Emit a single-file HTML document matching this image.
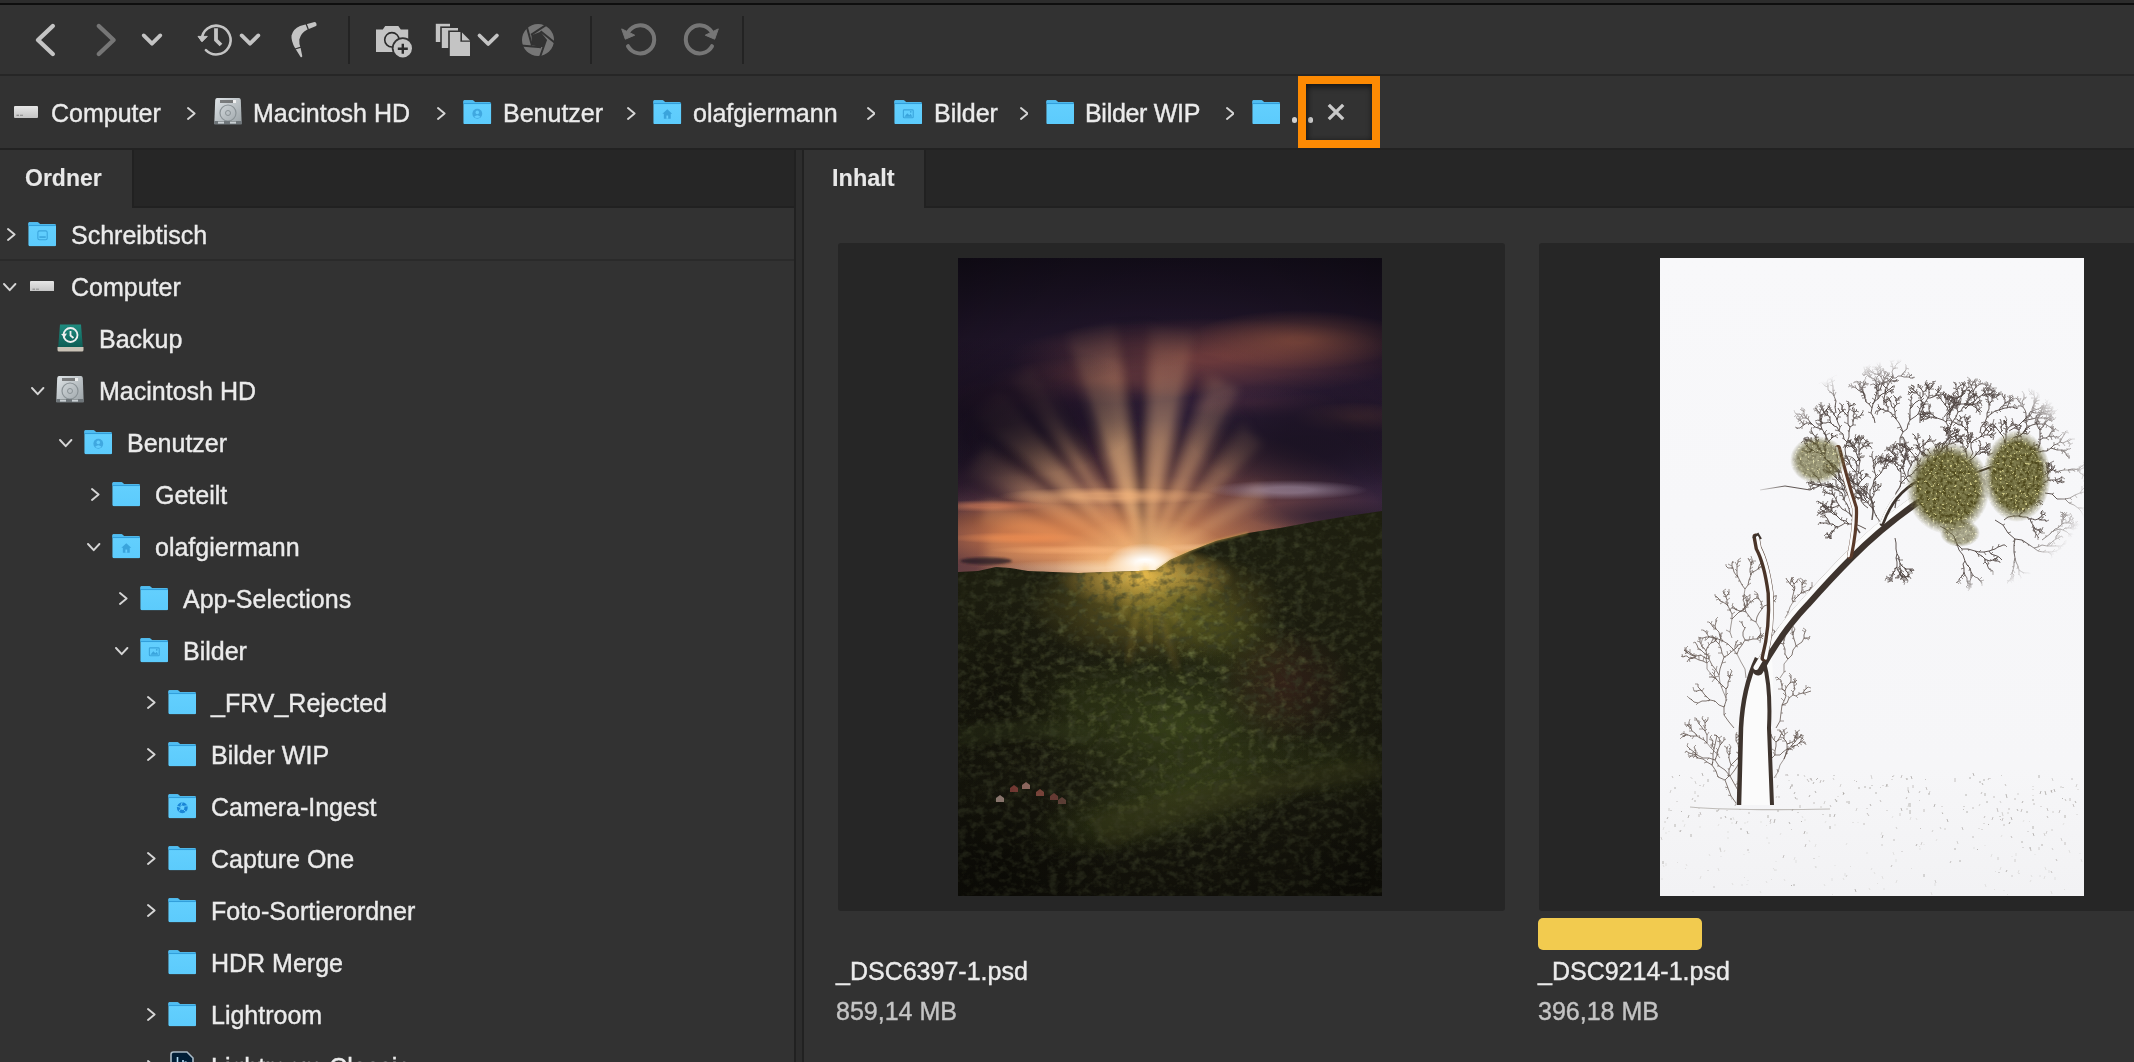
<!DOCTYPE html>
<html><head><meta charset="utf-8">
<style>
html,body{margin:0;padding:0;}
body{width:2134px;height:1062px;overflow:hidden;position:relative;background:#323232;font-family:"Liberation Sans",sans-serif;}
.t{position:absolute;white-space:nowrap;-webkit-text-stroke:0.4px currentColor;will-change:transform;}
svg{display:block}
</style></head><body>
<div style="position:absolute;left:0;top:0;width:2134px;height:3px;background:#2c2c2c"></div>
<div style="position:absolute;left:0;top:3px;width:2134px;height:2px;background:#0e0e0e"></div>
<div style="position:absolute;left:0;top:5px;width:2134px;height:69px;background:#323232"></div>
<div style="position:absolute;left:0;top:74px;width:2134px;height:2px;background:#262626"></div>
<div style="position:absolute;left:0;top:76px;width:2134px;height:72px;background:#323232"></div>
<div style="position:absolute;left:0;top:148px;width:2134px;height:2px;background:#222222"></div>
<div style="position:absolute;left:0;top:150px;width:795px;height:58px;background:#262626;box-shadow:inset 0 -2px 0 #212121"></div>
<div style="position:absolute;left:132px;top:150px;width:2px;height:58px;background:#212121"></div>
<div style="position:absolute;left:0;top:150px;width:132px;height:58px;background:#323232"></div>
<div style="position:absolute;left:804px;top:150px;width:1330px;height:58px;background:#262626;box-shadow:inset 0 -2px 0 #212121"></div>
<div style="position:absolute;left:924px;top:150px;width:2px;height:58px;background:#212121"></div>
<div style="position:absolute;left:804px;top:150px;width:120px;height:58px;background:#323232"></div>
<div style="position:absolute;left:795px;top:150px;width:9px;height:912px;background:#2d2d2d"></div>
<div style="position:absolute;left:794px;top:150px;width:2px;height:912px;background:#212121"></div>
<div style="position:absolute;left:802px;top:150px;width:2px;height:912px;background:#212121"></div>
<div class="t" style="left:25px;top:164.03px;font-size:23px;line-height:28px;color:#e8e8e8;font-weight:bold;-webkit-text-stroke:0.1px currentColor;">Ordner</div>
<div class="t" style="left:832px;top:163.86px;font-size:23.5px;line-height:28px;color:#e8e8e8;font-weight:bold;-webkit-text-stroke:0.1px currentColor;">Inhalt</div>
<div style="position:absolute;left:0;top:259px;width:794px;height:2px;background:#2a2a2a"></div>

<svg width="0" height="0" style="position:absolute">
<defs>
 <linearGradient id="fg" x1="0" y1="0" x2="0" y2="1">
  <stop offset="0" stop-color="#64d0fe"/><stop offset="1" stop-color="#5ccbfc"/>
 </linearGradient>
 <symbol id="folder" viewBox="0 0 29 25">
  <path d="M1.6 0.2 H9.2 Q10.4 0.2 11.2 1.2 L12.2 2.2 H26.8 Q28.6 2.2 28.6 4 V23.2 Q28.6 24.6 27.2 24.6 H1.8 Q0.4 24.6 0.4 23.2 V1.6 Q0.4 0.2 1.6 0.2 Z" fill="url(#fg)"/>
  <path d="M0.4 1.6 Q0.4 0.2 1.6 0.2 H9.2 Q10.4 0.2 11.2 1.2 L12.2 2.2 H26.8 Q28.6 2.2 28.6 4 V3.6 H0.4 Z" fill="#4fbdf2"/>
  <rect x="0.4" y="3.2" width="28.2" height="0.9" fill="#2590d0" opacity="0.85"/>
 </symbol>
 <linearGradient id="cg" x1="0" y1="0" x2="0" y2="1">
  <stop offset="0" stop-color="#e6e6e6"/><stop offset="1" stop-color="#c4c4c4"/>
 </linearGradient>
 <symbol id="computer" viewBox="0 0 24 12">
  <rect x="0" y="0" width="24" height="12" rx="1" fill="url(#cg)"/>
  <rect x="2.5" y="8.8" width="2.5" height="0.8" fill="#666"/><rect x="6" y="8.8" width="3" height="0.8" fill="#777"/>
 </symbol>
 <linearGradient id="hg" x1="0" y1="0" x2="1" y2="1">
  <stop offset="0" stop-color="#dfe4e7"/><stop offset="1" stop-color="#9aa2a6"/>
 </linearGradient>
 <symbol id="hd" viewBox="0 0 28 28">
  <path d="M3 1 H25 Q26.5 1 26.8 3 L27.6 24 V27 H0.4 V24 L1.2 3 Q1.5 1 3 1Z" fill="url(#hg)"/>
  <rect x="6" y="3" width="14" height="3" fill="#555" opacity="0.7"/>
  <rect x="19" y="3" width="3" height="3" fill="#eee"/>
  <circle cx="14" cy="16" r="8" fill="none" stroke="#8a9296" stroke-width="1.2"/>
  <circle cx="14" cy="16" r="2.5" fill="none" stroke="#8a9296" stroke-width="1"/>
  <rect x="0.4" y="24" width="27.2" height="3.5" fill="#6e7579"/>
  <rect x="4" y="24.6" width="6" height="2" fill="#c9cfd2"/><rect x="16" y="24.6" width="6" height="2" fill="#c9cfd2"/>
 </symbol>
 <linearGradient id="bg2" x1="0" y1="0" x2="0" y2="1">
  <stop offset="0" stop-color="#1f8c80"/><stop offset="1" stop-color="#0e5d55"/>
 </linearGradient>
 <symbol id="backup" viewBox="0 0 29 28">
  <path d="M4 0.5 H25 L26.8 23 H2.2 Z" fill="url(#bg2)"/>
  <path d="M1.5 23 H27.5 V26 Q27.5 27.5 26 27.5 H3 Q1.5 27.5 1.5 26Z" fill="#c9c2b6"/>
  <circle cx="14.5" cy="11" r="7" fill="none" stroke="#f0f0f0" stroke-width="1.8"/>
  <path d="M14.5 7 V11.5 L17.5 14" fill="none" stroke="#f0f0f0" stroke-width="1.8"/>
  <path d="M5 10 L8.5 13.5 L11 9.5Z" fill="#f0f0f0"/>
 </symbol>
</defs>
</svg>

<svg style="position:absolute;left:14px;top:106px" width="24" height="12"><use href="#computer"/></svg>
<div class="t" style="left:50.5px;top:98.34px;font-size:25px;line-height:30px;color:#ebebeb;font-weight:normal;">Computer</div>
<svg style="position:absolute;left:187px;top:107px" width="8.6" height="13" viewBox="0 0 8.6 13"><path d="M1 1 L7.6 6.5 L1 12" fill="none" stroke="#d6d6d6" stroke-width="1.9" stroke-linecap="round" stroke-linejoin="round"/></svg>
<svg style="position:absolute;left:214px;top:97px" width="28" height="28"><use href="#hd"/></svg>
<div class="t" style="left:252.5px;top:98.34px;font-size:25px;line-height:30px;color:#ebebeb;font-weight:normal;">Macintosh HD</div>
<svg style="position:absolute;left:437px;top:107px" width="8.6" height="13" viewBox="0 0 8.6 13"><path d="M1 1 L7.6 6.5 L1 12" fill="none" stroke="#d6d6d6" stroke-width="1.9" stroke-linecap="round" stroke-linejoin="round"/></svg>
<svg style="position:absolute;left:463px;top:99.5px" width="28.6" height="24.6" viewBox="0 0 29 25"><use href="#folder"/><circle cx="14.5" cy="14" r="5" fill="#40a8e0"/><circle cx="14.5" cy="12.6" r="1.8" fill="#62cdfd"/><path d="M11.2 17.3 Q14.5 13.6 17.8 17.3 Q14.5 19.5 11.2 17.3Z" fill="#62cdfd"/></svg>
<div class="t" style="left:503px;top:98.34px;font-size:25px;line-height:30px;color:#ebebeb;font-weight:normal;">Benutzer</div>
<svg style="position:absolute;left:627px;top:107px" width="8.6" height="13" viewBox="0 0 8.6 13"><path d="M1 1 L7.6 6.5 L1 12" fill="none" stroke="#d6d6d6" stroke-width="1.9" stroke-linecap="round" stroke-linejoin="round"/></svg>
<svg style="position:absolute;left:653px;top:99.5px" width="28.6" height="24.6" viewBox="0 0 29 25"><use href="#folder"/><path d="M9.5 14 L14.5 9.5 L19.5 14 H18 V19 H11 V14Z" fill="#3aa4dc"/><rect x="13.6" y="15.8" width="1.8" height="3.2" fill="#66cffd"/></svg>
<div class="t" style="left:692.5px;top:98.34px;font-size:25px;line-height:30px;color:#ebebeb;font-weight:normal;">olafgiermann</div>
<svg style="position:absolute;left:866.5px;top:107px" width="8.6" height="13" viewBox="0 0 8.6 13"><path d="M1 1 L7.6 6.5 L1 12" fill="none" stroke="#d6d6d6" stroke-width="1.9" stroke-linecap="round" stroke-linejoin="round"/></svg>
<svg style="position:absolute;left:893.5px;top:99.5px" width="28.6" height="24.6" viewBox="0 0 29 25"><use href="#folder"/><rect x="9.5" y="10" width="10" height="8" rx="0.8" fill="none" stroke="#3aa4dc" stroke-width="1.1"/><path d="M10.5 17 L13.5 13.5 L15.5 15.5 L17 14 L18.5 17Z" fill="#3aa4dc"/><circle cx="17" cy="12" r="0.9" fill="#3aa4dc"/></svg>
<div class="t" style="left:933.5px;top:98.34px;font-size:25px;line-height:30px;color:#ebebeb;font-weight:normal;">Bilder</div>
<svg style="position:absolute;left:1019.5px;top:107px" width="8.6" height="13" viewBox="0 0 8.6 13"><path d="M1 1 L7.6 6.5 L1 12" fill="none" stroke="#d6d6d6" stroke-width="1.9" stroke-linecap="round" stroke-linejoin="round"/></svg>
<svg style="position:absolute;left:1045.5px;top:99.5px" width="28.6" height="24.6" viewBox="0 0 29 25"><use href="#folder"/></svg>
<div class="t" style="left:1085px;top:98.34px;font-size:25px;line-height:30px;color:#ebebeb;font-weight:normal;letter-spacing:-0.3px">Bilder WIP</div>
<svg style="position:absolute;left:1225.5px;top:107px" width="8.6" height="13" viewBox="0 0 8.6 13"><path d="M1 1 L7.6 6.5 L1 12" fill="none" stroke="#d6d6d6" stroke-width="1.9" stroke-linecap="round" stroke-linejoin="round"/></svg>
<svg style="position:absolute;left:1251.5px;top:99.5px" width="28.6" height="24.6" viewBox="0 0 29 25"><use href="#folder"/></svg>
<div style="position:absolute;left:1291.7px;top:117.4px;width:5.2px;height:5.2px;border-radius:50%;background:#d0d0d0"></div>
<div style="position:absolute;left:1299.9px;top:117.4px;width:5.2px;height:5.2px;border-radius:50%;background:#d0d0d0"></div>
<div style="position:absolute;left:1308.0px;top:117.4px;width:5.2px;height:5.2px;border-radius:50%;background:#d0d0d0"></div>
<div style="position:absolute;left:1306px;top:84px;width:66px;height:56px;box-shadow:inset 0 3px 6px rgba(0,0,0,0.45), inset 2px 0 5px rgba(0,0,0,0.3);"></div>
<div style="position:absolute;left:1298px;top:76px;width:66px;height:56px;border:8px solid #fd8a03;"></div>
<svg style="position:absolute;left:1326px;top:102px" width="20" height="20" viewBox="0 0 20 20"><path d="M2.8 2.8 L17.2 17.2 M17.2 2.8 L2.8 17.2" stroke="#cacaca" stroke-width="3.3" stroke-linecap="butt"/></svg>
<svg style="position:absolute;left:0;top:5px" width="800" height="69" viewBox="0 5 800 69"><path d="M52.8 26 L38 40 L52.8 54" fill="none" stroke="#c4c4c4" stroke-width="4.4" stroke-linecap="round" stroke-linejoin="round"/><path d="M98.8 26 L113.6 40 L98.8 54" fill="none" stroke="#767676" stroke-width="4.4" stroke-linecap="round" stroke-linejoin="round"/><path d="M143.7 35.4 L152 43.7 L160.3 35.4" fill="none" stroke="#c4c4c4" stroke-width="3.8" stroke-linecap="round" stroke-linejoin="round"/><path d="M201.8 40 A14.4 14.4 0 1 1 205.9 50.1" fill="none" stroke="#c4c4c4" stroke-width="2.6" stroke-linecap="round"/><path d="M198 36.4 L207.3 36.4 L202 41.8Z" fill="#c4c4c4" stroke="#c4c4c4" stroke-width="1" stroke-linejoin="round"/><path d="M216 28.2 V40 L221 45" fill="none" stroke="#c4c4c4" stroke-width="3.8"/><path d="M241.7 35.4 L250 43.7 L258.3 35.4" fill="none" stroke="#c4c4c4" stroke-width="3.8" stroke-linecap="round" stroke-linejoin="round"/><path d="M316.5 24 Q317 26 315.5 26.3 L307 29.8 Q301 33 299.3 39.5 Q299 44 300.5 47.5 L302.3 56.3 Q301.6 58 300.6 57 L295 48 Q291 41 291.5 35.5 Q293 29 300 26 L314.5 22 Q316.2 22 316.5 24 Z" fill="#c4c4c4"/><path d="M306 23.5 L308.5 30 M295 49 L301 47.2" stroke="#323232" stroke-width="1.3"/><rect x="348" y="16" width="2" height="48" fill="#232323"/><rect x="590" y="16" width="2" height="48" fill="#232323"/><rect x="742" y="16" width="2" height="48" fill="#232323"/><path d="M376 29.6 H382.8 L385.2 25.9 H398.3 L400.8 29.6 H408.2 V52 H376Z" fill="#c4c4c4"/><circle cx="391.9" cy="39.8" r="7.2" fill="none" stroke="#2a2a2a" stroke-width="1.6"/><circle cx="402.8" cy="48.3" r="11" fill="#323232"/><circle cx="402.8" cy="48.3" r="9.2" fill="#c4c4c4"/><path d="M397.8 48.8 H407.8 M402.8 43.8 V53.8" stroke="#2a2a2a" stroke-width="2.4"/><path d="M435.8 23.8 H450 V42 H435.8Z" fill="#c4c4c4"/><path d="M440.2 26.4 H459.6 V49.6 H440.2Z" fill="#323232"/><path d="M441.8 28 H458 V48 H441.8Z" fill="#c4c4c4"/><path d="M448.2 30.4 H462.5 L471.6 39.5 V57.6 H448.2Z" fill="#323232"/><path d="M449.8 32 H460.4 V41.8 H470 V56 H449.8Z" fill="#c4c4c4"/><path d="M462 32.6 L470 40.4 H462Z" fill="#c4c4c4"/><path d="M479.5 35.5 L488.2 44 L496.9 35.5" fill="none" stroke="#c4c4c4" stroke-width="3.8" stroke-linecap="round" stroke-linejoin="round"/><circle cx="538" cy="40" r="16" fill="#767676"/><path d="M531.5 35.2 L540.6 31.7 L546.6 39.5 L542.7 47.3 L531.9 45.2Z" fill="#323232"/><path d="M531 34.8 L547 24.3 M540.6 31.3 L555.5 43.3 M546.2 39.5 L540 57 M541 47.3 L521 45.6 M531.9 45.2 L526.2 24.5" stroke="#323232" stroke-width="2"/><path d="M628.5 31.7 A14 14 0 1 1 628 46.2" fill="none" stroke="#767676" stroke-width="4" stroke-linecap="round"/><path d="M621.7 28.9 L634.7 35.2 L625.3 39.2Z" fill="#767676" stroke="#767676" stroke-width="1" stroke-linejoin="round"/><path d="M711.5 31.7 A14 14 0 1 0 712 46.2" fill="none" stroke="#767676" stroke-width="4" stroke-linecap="round"/><path d="M718.3 28.9 L705.3 35.2 L714.7 39.2Z" fill="#767676" stroke="#767676" stroke-width="1" stroke-linejoin="round"/></svg>
<svg style="position:absolute;left:7px;top:228px" width="8.6" height="13" viewBox="0 0 8.6 13"><path d="M1 1 L7.6 6.5 L1 12" fill="none" stroke="#d6d6d6" stroke-width="1.9" stroke-linecap="round" stroke-linejoin="round"/></svg>
<svg style="position:absolute;left:27.5px;top:222px" width="28.6" height="24.6" viewBox="0 0 29 25"><use href="#folder"/><rect x="10" y="9" width="9.5" height="9" rx="1.6" fill="none" stroke="#3aa4dc" stroke-width="1.1"/><rect x="11.5" y="14.5" width="6.5" height="1.6" fill="#3aa4dc"/></svg>
<div class="t" style="left:71px;top:220.34px;font-size:25px;line-height:30px;color:#ebebeb;font-weight:normal;">Schreibtisch</div>
<svg style="position:absolute;left:3.2px;top:283.4px" width="13.4" height="8.2" viewBox="0 0 13.4 8.2"><path d="M1 1 L6.7 7.199999999999999 L12.4 1" fill="none" stroke="#d6d6d6" stroke-width="1.9" stroke-linecap="round" stroke-linejoin="round"/></svg>
<svg style="position:absolute;left:30px;top:280.7px" width="24" height="10.6" viewBox="0 0 24 12" preserveAspectRatio="none"><use href="#computer"/></svg>
<div class="t" style="left:71px;top:272.34px;font-size:25px;line-height:30px;color:#ebebeb;font-weight:normal;">Computer</div>
<svg style="position:absolute;left:55.5px;top:324px" width="29" height="28"><use href="#backup"/></svg>
<div class="t" style="left:99px;top:324.34px;font-size:25px;line-height:30px;color:#ebebeb;font-weight:normal;">Backup</div>
<svg style="position:absolute;left:31.2px;top:387.4px" width="13.4" height="8.2" viewBox="0 0 13.4 8.2"><path d="M1 1 L6.7 7.199999999999999 L12.4 1" fill="none" stroke="#d6d6d6" stroke-width="1.9" stroke-linecap="round" stroke-linejoin="round"/></svg>
<svg style="position:absolute;left:56px;top:375px" width="28" height="28"><use href="#hd"/></svg>
<div class="t" style="left:99px;top:376.34px;font-size:25px;line-height:30px;color:#ebebeb;font-weight:normal;">Macintosh HD</div>
<svg style="position:absolute;left:59.2px;top:439.4px" width="13.4" height="8.2" viewBox="0 0 13.4 8.2"><path d="M1 1 L6.7 7.199999999999999 L12.4 1" fill="none" stroke="#d6d6d6" stroke-width="1.9" stroke-linecap="round" stroke-linejoin="round"/></svg>
<svg style="position:absolute;left:83.5px;top:430px" width="28.6" height="24.6" viewBox="0 0 29 25"><use href="#folder"/><circle cx="14.5" cy="14" r="5" fill="#40a8e0"/><circle cx="14.5" cy="12.6" r="1.8" fill="#62cdfd"/><path d="M11.2 17.3 Q14.5 13.6 17.8 17.3 Q14.5 19.5 11.2 17.3Z" fill="#62cdfd"/></svg>
<div class="t" style="left:127px;top:428.34px;font-size:25px;line-height:30px;color:#ebebeb;font-weight:normal;">Benutzer</div>
<svg style="position:absolute;left:91px;top:488px" width="8.6" height="13" viewBox="0 0 8.6 13"><path d="M1 1 L7.6 6.5 L1 12" fill="none" stroke="#d6d6d6" stroke-width="1.9" stroke-linecap="round" stroke-linejoin="round"/></svg>
<svg style="position:absolute;left:111.5px;top:482px" width="28.6" height="24.6" viewBox="0 0 29 25"><use href="#folder"/></svg>
<div class="t" style="left:155px;top:480.34px;font-size:25px;line-height:30px;color:#ebebeb;font-weight:normal;">Geteilt</div>
<svg style="position:absolute;left:87.2px;top:543.4px" width="13.4" height="8.2" viewBox="0 0 13.4 8.2"><path d="M1 1 L6.7 7.199999999999999 L12.4 1" fill="none" stroke="#d6d6d6" stroke-width="1.9" stroke-linecap="round" stroke-linejoin="round"/></svg>
<svg style="position:absolute;left:111.5px;top:534px" width="28.6" height="24.6" viewBox="0 0 29 25"><use href="#folder"/><path d="M9.5 14 L14.5 9.5 L19.5 14 H18 V19 H11 V14Z" fill="#3aa4dc"/><rect x="13.6" y="15.8" width="1.8" height="3.2" fill="#66cffd"/></svg>
<div class="t" style="left:155px;top:532.34px;font-size:25px;line-height:30px;color:#ebebeb;font-weight:normal;">olafgiermann</div>
<svg style="position:absolute;left:119px;top:592px" width="8.6" height="13" viewBox="0 0 8.6 13"><path d="M1 1 L7.6 6.5 L1 12" fill="none" stroke="#d6d6d6" stroke-width="1.9" stroke-linecap="round" stroke-linejoin="round"/></svg>
<svg style="position:absolute;left:139.5px;top:586px" width="28.6" height="24.6" viewBox="0 0 29 25"><use href="#folder"/></svg>
<div class="t" style="left:183px;top:584.34px;font-size:25px;line-height:30px;color:#ebebeb;font-weight:normal;">App-Selections</div>
<svg style="position:absolute;left:115.2px;top:647.4px" width="13.4" height="8.2" viewBox="0 0 13.4 8.2"><path d="M1 1 L6.7 7.199999999999999 L12.4 1" fill="none" stroke="#d6d6d6" stroke-width="1.9" stroke-linecap="round" stroke-linejoin="round"/></svg>
<svg style="position:absolute;left:139.5px;top:638px" width="28.6" height="24.6" viewBox="0 0 29 25"><use href="#folder"/><rect x="9.5" y="10" width="10" height="8" rx="0.8" fill="none" stroke="#3aa4dc" stroke-width="1.1"/><path d="M10.5 17 L13.5 13.5 L15.5 15.5 L17 14 L18.5 17Z" fill="#3aa4dc"/><circle cx="17" cy="12" r="0.9" fill="#3aa4dc"/></svg>
<div class="t" style="left:183px;top:636.34px;font-size:25px;line-height:30px;color:#ebebeb;font-weight:normal;">Bilder</div>
<svg style="position:absolute;left:147px;top:696px" width="8.6" height="13" viewBox="0 0 8.6 13"><path d="M1 1 L7.6 6.5 L1 12" fill="none" stroke="#d6d6d6" stroke-width="1.9" stroke-linecap="round" stroke-linejoin="round"/></svg>
<svg style="position:absolute;left:167.5px;top:690px" width="28.6" height="24.6" viewBox="0 0 29 25"><use href="#folder"/></svg>
<div class="t" style="left:211px;top:688.34px;font-size:25px;line-height:30px;color:#ebebeb;font-weight:normal;">_FRV_Rejected</div>
<svg style="position:absolute;left:147px;top:748px" width="8.6" height="13" viewBox="0 0 8.6 13"><path d="M1 1 L7.6 6.5 L1 12" fill="none" stroke="#d6d6d6" stroke-width="1.9" stroke-linecap="round" stroke-linejoin="round"/></svg>
<svg style="position:absolute;left:167.5px;top:742px" width="28.6" height="24.6" viewBox="0 0 29 25"><use href="#folder"/></svg>
<div class="t" style="left:211px;top:740.34px;font-size:25px;line-height:30px;color:#ebebeb;font-weight:normal;">Bilder WIP</div>
<svg style="position:absolute;left:167.5px;top:794px" width="28.6" height="24.6" viewBox="0 0 29 25"><use href="#folder"/><circle cx="14.5" cy="14" r="5.5" fill="#1a86d6"/><circle cx="14.5" cy="14" r="2.2" fill="#66cffd"/><path d="M14.5 8.5 L13 12 M19.5 12 L16 12.5 M18 18 L15.5 15.5 M11 18 L12.8 15 M9.2 12.5 L12.5 13.5" stroke="#66cffd" stroke-width="1"/></svg>
<div class="t" style="left:211px;top:792.34px;font-size:25px;line-height:30px;color:#ebebeb;font-weight:normal;">Camera-Ingest</div>
<svg style="position:absolute;left:147px;top:852px" width="8.6" height="13" viewBox="0 0 8.6 13"><path d="M1 1 L7.6 6.5 L1 12" fill="none" stroke="#d6d6d6" stroke-width="1.9" stroke-linecap="round" stroke-linejoin="round"/></svg>
<svg style="position:absolute;left:167.5px;top:846px" width="28.6" height="24.6" viewBox="0 0 29 25"><use href="#folder"/></svg>
<div class="t" style="left:211px;top:844.34px;font-size:25px;line-height:30px;color:#ebebeb;font-weight:normal;">Capture One</div>
<svg style="position:absolute;left:147px;top:904px" width="8.6" height="13" viewBox="0 0 8.6 13"><path d="M1 1 L7.6 6.5 L1 12" fill="none" stroke="#d6d6d6" stroke-width="1.9" stroke-linecap="round" stroke-linejoin="round"/></svg>
<svg style="position:absolute;left:167.5px;top:898px" width="28.6" height="24.6" viewBox="0 0 29 25"><use href="#folder"/></svg>
<div class="t" style="left:211px;top:896.34px;font-size:25px;line-height:30px;color:#ebebeb;font-weight:normal;">Foto-Sortierordner</div>
<svg style="position:absolute;left:167.5px;top:950px" width="28.6" height="24.6" viewBox="0 0 29 25"><use href="#folder"/></svg>
<div class="t" style="left:211px;top:948.34px;font-size:25px;line-height:30px;color:#ebebeb;font-weight:normal;">HDR Merge</div>
<svg style="position:absolute;left:147px;top:1008px" width="8.6" height="13" viewBox="0 0 8.6 13"><path d="M1 1 L7.6 6.5 L1 12" fill="none" stroke="#d6d6d6" stroke-width="1.9" stroke-linecap="round" stroke-linejoin="round"/></svg>
<svg style="position:absolute;left:167.5px;top:1002px" width="28.6" height="24.6" viewBox="0 0 29 25"><use href="#folder"/></svg>
<div class="t" style="left:211px;top:1000.34px;font-size:25px;line-height:30px;color:#ebebeb;font-weight:normal;">Lightroom</div>
<svg style="position:absolute;left:147px;top:1060px" width="8.6" height="13" viewBox="0 0 8.6 13"><path d="M1 1 L7.6 6.5 L1 12" fill="none" stroke="#d6d6d6" stroke-width="1.9" stroke-linecap="round" stroke-linejoin="round"/></svg>
<svg style="position:absolute;left:170px;top:1051px" width="24" height="28" viewBox="0 0 24 28"><path d="M3.5 1 H17 L23 7 V27 H1 V3.5 Q1 1 3.5 1Z" fill="#001e36" stroke="#a9bac6" stroke-width="1.6"/><path d="M7.5 6 V16 M13 9 V16 Q13 11 16.5 11" fill="none" stroke="#b4dcf5" stroke-width="1.6"/></svg>
<div class="t" style="left:211px;top:1052.34px;font-size:25px;line-height:30px;color:#ebebeb;font-weight:normal;">Lightroom Classic</div>
<div style="position:absolute;left:838px;top:243px;width:667px;height:668px;background:#262626;border-radius:3px"></div>
<div style="position:absolute;left:1539px;top:243px;width:700px;height:668px;background:#262626;border-radius:3px"></div>
<div style="position:absolute;left:958px;top:258px;width:424px;height:638px;overflow:hidden"><svg width="424" height="638" viewBox="0 0 424 638">
<defs><radialGradient id="g1"><stop offset="0.1" stop-color="#9a5044" stop-opacity="0.6"/><stop offset="1" stop-color="#9a5044" stop-opacity="0"/></radialGradient><radialGradient id="g2"><stop offset="0.1" stop-color="#b06448" stop-opacity="0.55"/><stop offset="1" stop-color="#b06448" stop-opacity="0"/></radialGradient><radialGradient id="g3"><stop offset="0.1" stop-color="#8a4a44" stop-opacity="0.55"/><stop offset="1" stop-color="#8a4a44" stop-opacity="0"/></radialGradient><radialGradient id="g4"><stop offset="0.1" stop-color="#5a3040" stop-opacity="0.45"/><stop offset="1" stop-color="#5a3040" stop-opacity="0"/></radialGradient><radialGradient id="g5"><stop offset="0.1" stop-color="#b06a50" stop-opacity="0.5"/><stop offset="1" stop-color="#b06a50" stop-opacity="0"/></radialGradient><radialGradient id="g6"><stop offset="0.1" stop-color="#6a3a46" stop-opacity="0.4"/><stop offset="1" stop-color="#6a3a46" stop-opacity="0"/></radialGradient><radialGradient id="g7"><stop offset="0.2" stop-color="#140e1c" stop-opacity="0.8"/><stop offset="1" stop-color="#140e1c" stop-opacity="0"/></radialGradient><radialGradient id="g8"><stop offset="0.2" stop-color="#1a1222" stop-opacity="0.75"/><stop offset="1" stop-color="#1a1222" stop-opacity="0"/></radialGradient><radialGradient id="g9"><stop offset="0.2" stop-color="#2a2036" stop-opacity="0.6"/><stop offset="1" stop-color="#2a2036" stop-opacity="0"/></radialGradient><radialGradient id="g10"><stop offset="0.2" stop-color="#2a1a2a" stop-opacity="0.6"/><stop offset="1" stop-color="#2a1a2a" stop-opacity="0"/></radialGradient><radialGradient id="g11"><stop offset="0.0" stop-color="#e8844a" stop-opacity="0.62"/><stop offset="1" stop-color="#e8844a" stop-opacity="0"/></radialGradient><radialGradient id="g12"><stop offset="0.0" stop-color="#f8a660" stop-opacity="0.72"/><stop offset="1" stop-color="#f8a660" stop-opacity="0"/></radialGradient><radialGradient id="g13"><stop offset="0.1" stop-color="#ffd090" stop-opacity="0.88"/><stop offset="1" stop-color="#ffd090" stop-opacity="0"/></radialGradient><radialGradient id="g14"><stop offset="0.25" stop-color="#150d1c" stop-opacity="0.7"/><stop offset="1" stop-color="#150d1c" stop-opacity="0"/></radialGradient><radialGradient id="g15"><stop offset="0.25" stop-color="#1a1222" stop-opacity="0.65"/><stop offset="1" stop-color="#1a1222" stop-opacity="0"/></radialGradient><radialGradient id="g16"><stop offset="0.25" stop-color="#20182c" stop-opacity="0.55"/><stop offset="1" stop-color="#20182c" stop-opacity="0"/></radialGradient><radialGradient id="g17"><stop offset="0.25" stop-color="#1a1020" stop-opacity="0.5"/><stop offset="1" stop-color="#1a1020" stop-opacity="0"/></radialGradient><radialGradient id="g18"><stop offset="0.3" stop-color="#ffbc80" stop-opacity="0.55"/><stop offset="1" stop-color="#ffbc80" stop-opacity="0"/></radialGradient><radialGradient id="g19"><stop offset="0.3" stop-color="#b8a8c0" stop-opacity="0.5"/><stop offset="1" stop-color="#b8a8c0" stop-opacity="0"/></radialGradient><radialGradient id="g20"><stop offset="0.3" stop-color="#f89a60" stop-opacity="0.55"/><stop offset="1" stop-color="#f89a60" stop-opacity="0"/></radialGradient><radialGradient id="g21"><stop offset="0.3" stop-color="#ffc890" stop-opacity="0.55"/><stop offset="1" stop-color="#ffc890" stop-opacity="0"/></radialGradient><radialGradient id="g22"><stop offset="0.3" stop-color="#ffd0a0" stop-opacity="0.45"/><stop offset="1" stop-color="#ffd0a0" stop-opacity="0"/></radialGradient><radialGradient id="g23"><stop offset="0.3" stop-color="#e88a60" stop-opacity="0.5"/><stop offset="1" stop-color="#e88a60" stop-opacity="0"/></radialGradient><radialGradient id="g24"><stop offset="0.2" stop-color="#f08a4a" stop-opacity="0.6"/><stop offset="1" stop-color="#f08a4a" stop-opacity="0"/></radialGradient><radialGradient id="g25"><stop offset="0.2" stop-color="#c07a60" stop-opacity="0.4"/><stop offset="1" stop-color="#c07a60" stop-opacity="0"/></radialGradient><radialGradient id="g26"><stop offset="0.25" stop-color="#ffffff" stop-opacity="1.0"/><stop offset="1" stop-color="#ffffff" stop-opacity="0"/></radialGradient><radialGradient id="g27"><stop offset="0.2" stop-color="#ffe8c8" stop-opacity="0.55"/><stop offset="1" stop-color="#ffe8c8" stop-opacity="0"/></radialGradient><radialGradient id="g28"><stop offset="0.0" stop-color="#8a7a2c" stop-opacity="0.75"/><stop offset="1" stop-color="#8a7a2c" stop-opacity="0"/></radialGradient><radialGradient id="g29"><stop offset="0.1" stop-color="#f0c050" stop-opacity="0.9"/><stop offset="1" stop-color="#f0c050" stop-opacity="0"/></radialGradient><radialGradient id="g30"><stop offset="0.0" stop-color="#5a6020" stop-opacity="0.55"/><stop offset="1" stop-color="#5a6020" stop-opacity="0"/></radialGradient><radialGradient id="g31"><stop offset="0.0" stop-color="#4a5a20" stop-opacity="0.6"/><stop offset="1" stop-color="#4a5a20" stop-opacity="0"/></radialGradient><radialGradient id="g32"><stop offset="0.0" stop-color="#2e3614" stop-opacity="0.5"/><stop offset="1" stop-color="#2e3614" stop-opacity="0"/></radialGradient><radialGradient id="g33"><stop offset="0.0" stop-color="#4a2622" stop-opacity="0.5"/><stop offset="1" stop-color="#4a2622" stop-opacity="0"/></radialGradient><radialGradient id="g34"><stop offset="0.0" stop-color="#46521e" stop-opacity="0.55"/><stop offset="1" stop-color="#46521e" stop-opacity="0"/></radialGradient><radialGradient id="g35"><stop offset="0.0" stop-color="#343c16" stop-opacity="0.5"/><stop offset="1" stop-color="#343c16" stop-opacity="0"/></radialGradient><radialGradient id="g36"><stop offset="0.0" stop-color="#2e3614" stop-opacity="0.5"/><stop offset="1" stop-color="#2e3614" stop-opacity="0"/></radialGradient><radialGradient id="g37"><stop offset="0.0" stop-color="#0c0b06" stop-opacity="0.6"/><stop offset="1" stop-color="#0c0b06" stop-opacity="0"/></radialGradient><radialGradient id="g38"><stop offset="0.0" stop-color="#0a0905" stop-opacity="0.6"/><stop offset="1" stop-color="#0a0905" stop-opacity="0"/></radialGradient><radialGradient id="g39"><stop offset="0.0" stop-color="#0c0b06" stop-opacity="0.5"/><stop offset="1" stop-color="#0c0b06" stop-opacity="0"/></radialGradient><filter id="b3" x="-20%" y="-20%" width="140%" height="140%"><feGaussianBlur stdDeviation="3"/></filter><filter id="b5" x="-20%" y="-20%" width="140%" height="140%"><feGaussianBlur stdDeviation="5"/></filter><filter id="b1" x="-20%" y="-20%" width="140%" height="140%"><feGaussianBlur stdDeviation="1.2"/></filter><clipPath id="land"><path d="M0 314 L20 313 L38 309 L52 310 L70 313 L120 315 L180 313 L198 312 L212 302 L232 293 L258 283 L290 275 L322 270 L360 263 L390 258 L424 253 V638 H0Z"/></clipPath><clipPath id="skyc"><rect x="0" y="0" width="424" height="330"/></clipPath><linearGradient id="sky" x1="0" y1="0" x2="0" y2="1"><stop offset="0" stop-color="#17101f"/><stop offset="0.1" stop-color="#21162b"/><stop offset="0.22" stop-color="#2c1c36"/><stop offset="0.35" stop-color="#33223c"/><stop offset="0.5" stop-color="#4a3040"/></linearGradient><radialGradient id="rmg" cx="187" cy="307" r="250" gradientUnits="userSpaceOnUse"><stop offset="0" stop-color="#fff" stop-opacity="1"/><stop offset="0.5" stop-color="#fff" stop-opacity="0.75"/><stop offset="1" stop-color="#fff" stop-opacity="0"/></radialGradient><mask id="rmask"><rect width="424" height="638" fill="url(#rmg)"/></mask><linearGradient id="landg" x1="0" y1="0" x2="0" y2="1"><stop offset="0" stop-color="#2a2a14"/><stop offset="0.4" stop-color="#1e1f10"/><stop offset="1" stop-color="#14130b"/></linearGradient><radialGradient id="vig" cx="212" cy="330" r="440" gradientUnits="userSpaceOnUse"><stop offset="0.5" stop-color="#000" stop-opacity="0"/><stop offset="1" stop-color="#000" stop-opacity="0.5"/></radialGradient></defs>
<rect width="424" height="638" fill="url(#sky)"/>
<g clip-path="url(#skyc)">
<ellipse cx="250" cy="100" rx="200" ry="40" fill="url(#g1)"/>
<ellipse cx="340" cy="82" rx="110" ry="30" fill="url(#g2)"/>
<ellipse cx="150" cy="122" rx="120" ry="24" fill="url(#g3)"/>
<ellipse cx="60" cy="140" rx="80" ry="20" fill="url(#g4)"/>
<ellipse cx="395" cy="160" rx="60" ry="16" fill="url(#g5)"/>
<ellipse cx="300" cy="145" rx="80" ry="16" fill="url(#g6)"/>
<ellipse cx="50" cy="185" rx="140" ry="60" fill="url(#g7)"/>
<ellipse cx="350" cy="190" rx="160" ry="55" fill="url(#g8)"/>
<ellipse cx="400" cy="270" rx="80" ry="20" fill="url(#g9)"/>
<ellipse cx="30" cy="262" rx="70" ry="14" fill="url(#g10)"/>
<ellipse cx="187" cy="297" rx="260" ry="135" fill="url(#g11)"/>
<ellipse cx="187" cy="302" rx="170" ry="85" fill="url(#g12)"/>
<ellipse cx="187" cy="307" rx="90" ry="48" fill="url(#g13)"/>
<g mask="url(#rmask)" filter="url(#b5)">
<path d="M187 307L27 304L30 276Z" fill="#ffc888" opacity="0.45"/>
<path d="M187 307L22 266L29 243Z" fill="#ffc888" opacity="0.45"/>
<path d="M187 307L10 213L25 189Z" fill="#ffc888" opacity="0.5"/>
<path d="M187 307L15 155L41 130Z" fill="#ffc888" opacity="0.55"/>
<path d="M187 307L52 121L72 108Z" fill="#ffc888" opacity="0.5"/>
<path d="M187 307L106 71L157 59Z" fill="#ffc888" opacity="0.75"/>
<path d="M187 307L195 67L237 72Z" fill="#ffc888" opacity="0.65"/>
<path d="M187 307L254 118L282 131Z" fill="#ffc888" opacity="0.5"/>
<path d="M187 307L287 169L305 185Z" fill="#ffc888" opacity="0.35"/>
<path d="M187 307L300 225L311 241Z" fill="#ffc888" opacity="0.3"/>
<path d="M187 307L154 59L194 57Z" fill="#2a1a2c" opacity="0.65"/>
<path d="M187 307L96 129L115 120Z" fill="#2a1a2c" opacity="0.45"/>
<path d="M187 307L232 112L252 118Z" fill="#2a1a2c" opacity="0.4"/>
<path d="M187 307L278 152L292 160Z" fill="#2a1a2c" opacity="0.3"/>
<path d="M187 307L10 176L22 161Z" fill="#2a1a2c" opacity="0.35"/>
<path d="M187 307L2 230L10 215Z" fill="#2a1a2c" opacity="0.3"/>
</g>
<ellipse cx="40" cy="150" rx="150" ry="70" fill="url(#g14)"/>
<ellipse cx="360" cy="175" rx="130" ry="60" fill="url(#g15)"/>
<ellipse cx="380" cy="258" rx="90" ry="16" fill="url(#g16)"/>
<ellipse cx="0" cy="215" rx="80" ry="40" fill="url(#g17)"/>
<ellipse cx="150" cy="238" rx="110" ry="9" fill="url(#g18)"/>
<ellipse cx="330" cy="232" rx="80" ry="10" fill="url(#g19)"/>
<ellipse cx="60" cy="280" rx="70" ry="6" fill="url(#g20)"/>
<ellipse cx="120" cy="292" rx="90" ry="5" fill="url(#g21)"/>
<ellipse cx="255" cy="290" rx="60" ry="5" fill="url(#g22)"/>
<ellipse cx="30" cy="248" rx="60" ry="6" fill="url(#g23)"/>
<ellipse cx="70" cy="275" rx="130" ry="38" fill="url(#g24)"/>
<ellipse cx="330" cy="300" rx="90" ry="20" fill="url(#g25)"/>
<ellipse cx="28" cy="303" rx="26" ry="3.5" fill="#1a1422" opacity="0.7" filter="url(#b1)"/>
<ellipse cx="187" cy="307" rx="40" ry="22" fill="url(#g26)"/>
<ellipse cx="167" cy="311" rx="150" ry="10" fill="url(#g27)"/>
</g>
<g clip-path="url(#land)">
<rect width="424" height="638" fill="url(#landg)"/>
<ellipse cx="197" cy="347" rx="130" ry="60" fill="url(#g28)"/>
<ellipse cx="187" cy="319" rx="90" ry="32" fill="url(#g29)"/>
<ellipse cx="247" cy="367" rx="110" ry="45" fill="url(#g30)" transform="rotate(25 247 367)"/>
<ellipse cx="217" cy="467" rx="140" ry="80" fill="url(#g31)"/>
<ellipse cx="127" cy="447" rx="90" ry="50" fill="url(#g32)"/>
<ellipse cx="327" cy="427" rx="70" ry="60" fill="url(#g33)"/>
<ellipse cx="227" cy="537" rx="160" ry="50" fill="url(#g34)" transform="rotate(-15 227 537)"/>
<ellipse cx="147" cy="567" rx="90" ry="30" fill="url(#g35)" transform="rotate(-10 147 567)"/>
<ellipse cx="377" cy="507" rx="70" ry="40" fill="url(#g36)"/>
<ellipse cx="40" cy="440" rx="80" ry="100" fill="url(#g37)"/>
<ellipse cx="40" cy="610" rx="120" ry="80" fill="url(#g38)"/>
<ellipse cx="400" cy="620" rx="60" ry="60" fill="url(#g39)"/>
<filter id="fdark" x="0" y="0" width="100%" height="100%" filterUnits="userSpaceOnUse"><feTurbulence type="fractalNoise" baseFrequency="0.11 0.14" numOctaves="3" seed="4"/><feColorMatrix type="matrix" values="0 0 0 0 0.04  0 0 0 0 0.045  0 0 0 0 0.02  -3.2 0 0 0 1.75"/></filter>
<filter id="flit" x="0" y="0" width="100%" height="100%" filterUnits="userSpaceOnUse"><feTurbulence type="fractalNoise" baseFrequency="0.1 0.13" numOctaves="3" seed="9"/><feColorMatrix type="matrix" values="0 0 0 0 0.34  0 0 0 0 0.40  0 0 0 0 0.13  2.6 0 0 0 -1.35"/></filter>
<radialGradient id="litg" cx="217" cy="417" r="260" gradientUnits="userSpaceOnUse"><stop offset="0" stop-color="#fff" stop-opacity="0.9"/><stop offset="0.5" stop-color="#fff" stop-opacity="0.45"/><stop offset="1" stop-color="#fff" stop-opacity="0"/></radialGradient>
<mask id="litm"><rect width="424" height="638" fill="url(#litg)"/></mask>
<rect x="0" y="250" width="424" height="388" filter="url(#fdark)" opacity="0.6"/>
<g mask="url(#litm)"><rect x="0" y="250" width="424" height="388" filter="url(#flit)" opacity="0.55"/></g>
<path d="M130 560 Q250 520 424 500 L424 520 Q260 545 150 590Z" fill="#3a3a1c" opacity="0.35" filter="url(#b3)"/>
<path d="M0 470 Q60 455 140 470 L130 485 Q60 475 0 490Z" fill="#3a4420" opacity="0.3" filter="url(#b3)"/>
</g>
<path d="M198 312 L212 302 L232 293 L258 283 L290 275" fill="none" stroke="#d8b050" stroke-width="2" opacity="0.5" filter="url(#b1)"/>
<path d="M187 310L222 368" stroke="#ffcc50" stroke-width="2" opacity="0.4" filter="url(#b3)"/>
<path d="M187 310L219 412" stroke="#ffcc50" stroke-width="2" opacity="0.4" filter="url(#b3)"/>
<path d="M187 310L193 387" stroke="#ffcc50" stroke-width="2" opacity="0.4" filter="url(#b3)"/>
<path d="M187 310L170 405" stroke="#ffcc50" stroke-width="2" opacity="0.4" filter="url(#b3)"/>
<path d="M187 310L162 361" stroke="#ffcc50" stroke-width="2" opacity="0.4" filter="url(#b3)"/>
<path d="M52 530l4 -3l4 3v4h-8z" fill="#a04844" opacity="0.7"/>
<path d="M64 527l4 -3l4 3v4h-8z" fill="#c89088" opacity="0.7"/>
<path d="M78 534l4 -3l4 3v4h-8z" fill="#a85a50" opacity="0.7"/>
<path d="M38 540l4 -3l4 3v4h-8z" fill="#d0b0a8" opacity="0.7"/>
<path d="M92 538l4 -3l4 3v4h-8z" fill="#8a4a44" opacity="0.7"/>
<path d="M100 542l4 -3l4 3v4h-8z" fill="#7a5048" opacity="0.7"/>
<rect width="424" height="638" fill="url(#vig)"/>
</svg></div>
<div style="position:absolute;left:1660px;top:258px;width:424px;height:638px;overflow:hidden;background:#f7f7f9"><svg width="424" height="638" viewBox="0 0 424 638">
<defs>
 <linearGradient id="tsky" x1="0" y1="0" x2="0" y2="1">
  <stop offset="0" stop-color="#f8f8fa"/><stop offset="0.8" stop-color="#f6f6f8"/><stop offset="1" stop-color="#f2f2f4"/>
 </linearGradient>
 <radialGradient id="crg" cx="262" cy="222" r="170" gradientUnits="userSpaceOnUse" gradientTransform="translate(262 222) scale(1 0.72) translate(-262 -222)"><stop offset="0" stop-color="#fff" stop-opacity="1"/><stop offset="0.8" stop-color="#fff" stop-opacity="1"/><stop offset="1" stop-color="#fff" stop-opacity="0"/></radialGradient>
 <mask id="crown"><rect width="424" height="638" fill="url(#crg)"/></mask>
 <filter id="mist" x="0" y="0" width="100%" height="100%" filterUnits="userSpaceOnUse">
  <feTurbulence type="fractalNoise" baseFrequency="0.3" numOctaves="2" seed="3"/>
  <feColorMatrix type="matrix" values="0 0 0 0 0.2  0 0 0 0 0.19  0 0 0 0 0.07  3.2 0 0 0 -0.9"/>
 </filter>
 <filter id="mist2" x="0" y="0" width="100%" height="100%" filterUnits="userSpaceOnUse">
  <feTurbulence type="fractalNoise" baseFrequency="0.4" numOctaves="2" seed="8"/>
  <feColorMatrix type="matrix" values="0 0 0 0 0.62  0 0 0 0 0.58  0 0 0 0 0.24  7 0 0 0 -4.3"/>
 </filter>
 <radialGradient id="mg"><stop offset="0" stop-color="#fff" stop-opacity="1"/><stop offset="0.72" stop-color="#fff" stop-opacity="1"/><stop offset="1" stop-color="#fff" stop-opacity="0"/></radialGradient>
 <mask id="mm">
  <ellipse cx="288" cy="230" rx="42" ry="46" fill="url(#mg)"/>
  <ellipse cx="357" cy="218" rx="34" ry="46" fill="url(#mg)"/>
  <ellipse cx="158" cy="202" rx="28" ry="24" fill="url(#mg)" opacity="0.7"/>
  <ellipse cx="300" cy="275" rx="20" ry="14" fill="url(#mg)" opacity="0.6"/>
 </mask>
</defs>
<rect width="424" height="638" fill="url(#tsky)"/>
<g mask="url(#crown)">
<path d="M196 269L194 269M195 262L191 262M186 253L185 250M179 247L177 250M172 250L171 248M169 249L168 248M167 250L167 253M161 254L158 252M160 255L157 254M158 256L157 258M167 249L164 250M165 247L163 248M163 246L163 243M161 245L160 246M159 244L158 246M158 243L156 244M177 244L174 244M176 241L177 238M174 238L175 234M170 236L169 234M167 235L167 233M165 235L164 238M165 233L165 231M163 232L164 229M173 236L171 235M172 233L169 232M172 230L173 228M171 229L167 229M168 226L166 227M172 227L169 225M172 226L173 225M189 251L190 250M187 246L185 246M184 242L182 241M183 238L179 237M182 235L179 235M177 232L174 232M173 230L173 227M171 229L170 225M169 229L168 226M167 229L165 226M172 228L168 229M178 231L181 229M177 229L178 226M176 222L172 221M185 238L187 237M183 232L181 230M182 226L183 225M180 222L181 219M179 221L180 217M178 219L179 216M185 229L187 229M187 225L186 222M188 223L186 220M188 221L185 220M187 219L185 218M188 223L187 220M188 221L187 217M190 220L192 219M213 246L215 244M198 227L199 224M193 225L193 221M190 222L190 219M187 219L185 219M183 215L182 213M180 214L178 216M174 214L173 212M179 213L175 214M185 216L183 217M182 214L183 210M176 211L175 209M173 211L172 209M178 211L175 210M175 207L173 207M197 218L198 215M196 214L192 213M191 209L192 207M190 206L186 207M188 205L186 206M184 202L186 198M189 203L191 200M188 201L184 200M187 198L184 198M197 207L195 204M195 202L192 202M191 199L188 198M198 202L201 202M200 200L204 199M201 198L205 198M210 233L210 231M214 222L216 221M216 218L218 216M215 215L212 213M213 208L216 206M214 206L216 203M212 199L209 198M212 196L213 193M214 202L216 202M216 198L218 199M216 206L215 203M218 202L217 200M220 203L220 200M222 202L222 200M224 202L227 204M221 215L219 212M223 211L222 209M224 209L227 208M225 206L228 206M226 203L225 201M226 201L224 200M227 199L229 198M227 197L229 195M228 201L231 202M229 200L229 196M231 198L232 199M226 210L227 211M227 207L229 208M229 204L233 206M231 203L230 200M233 201L232 200M234 200L238 201M231 204L233 200M233 202L233 199M235 201L238 202M236 243L240 242M241 224L239 223M241 219L244 218M238 212L240 210M237 209L239 207M229 203L229 199M228 203L227 201M226 202L226 200M225 202L223 204M228 202L229 198M226 201L224 201M226 199L227 196M236 205L234 203M236 202L234 199M236 200L239 199M235 198L236 195M238 195L237 193M240 211L243 210M242 209L245 208M244 206L241 203M244 204L241 202M245 202L246 201M246 197L249 198M244 204L243 201M245 200L249 200M246 198L245 195M247 197L249 196M247 195L246 192M241 225L245 225M245 221L244 218M248 218L252 219M250 206L252 203M249 204L250 202M248 202L246 201M248 200L250 198M247 199L245 198M247 200L249 199M247 197L245 196M252 205L251 202M253 203L255 204M255 202L255 199M256 201L255 198M257 202L259 204M260 203L261 200M253 215L255 215M255 212L258 212M257 211L255 209M259 208L258 205M259 204L261 203M262 208L264 208M263 207L264 205M257 212L258 210M260 212L261 213M263 211L265 207M265 211L268 213M260 233L261 232M261 218L264 217M260 213L262 211M258 208L256 208M257 202L259 200M255 199L251 199M248 191L245 192M245 190L245 188M243 188L241 190M238 185L236 187M249 190L245 190M247 188L243 188M245 183L243 183M244 181L241 181M243 179L241 179M258 198L255 195M260 194L263 194M260 190L257 188M259 188L260 185M257 182L254 180M256 180L254 180M253 176L252 176M258 180L261 179M258 178L260 177M268 182L272 181M270 178L269 177M270 183L270 181M272 183L274 186M275 183L276 181M263 214L262 212M266 209L270 208M267 201L269 199M267 198L265 198M264 195L261 194M259 191L257 192M258 190L256 190M257 187L253 187M258 190L255 190M264 193L266 191M264 190L262 190M263 188L266 186M263 186L267 184M263 184L262 183M264 182L262 182M271 202L273 202M281 193L283 193M283 191L284 190M282 188L283 187M283 186L279 185M284 184L286 183M284 189L287 189M285 188L284 185M281 198L281 195M286 194L285 192M287 192L286 189M287 190L286 188M288 188L286 185M290 195L292 193M304 213L303 211M306 206L308 206M305 202L302 201M306 194L303 192M305 192L306 190M303 189L300 189M300 184L301 181M298 183L299 180M297 182L298 180M297 181L295 181M296 179L297 176M302 183L300 182M301 180L299 180M301 178L298 179M299 178L296 177M301 179L304 178M302 178L305 177M302 177L305 176M306 191L304 188M308 189L306 187M308 186L307 183M307 184L310 183M307 182L304 180M308 181L311 178M307 178L304 179M308 178L310 178M309 177L308 176M310 184L308 181M310 182L312 181M311 180L314 179M311 179L313 178M311 176L310 174M311 179L311 175M312 177L312 174M313 177L312 174M308 203L311 204M316 196L316 193M318 194L320 194M320 192L320 189M320 190L324 189M320 188L318 187M320 184L318 182M320 183L319 182M322 191L325 192M324 191L327 192M325 189L327 191M327 187L326 184M328 186L331 186M326 189L328 192M327 189L328 186M329 188L329 185M320 196L321 193M322 194L323 195M324 194L326 194M325 193L328 193M329 191L328 189M330 190L330 187M325 195L326 196M327 194L328 197M329 194L331 197M330 193L331 191M328 195L328 198M329 196L329 198M330 196L333 195M333 206L335 206M338 202L341 202M345 189L347 189M336 169L333 170M334 169L332 170M332 168L330 169M330 168L331 165M334 168L336 165M333 166L332 166M333 165L334 161M342 173L343 172M341 170L340 168M341 165L338 165M344 166L344 162M345 164L344 162M346 177L343 175M346 174L348 174M346 171L343 170M347 169L345 168M346 167L344 164M346 165L347 164M345 163L343 163M346 165L344 163M347 162L345 158M347 172L347 168M351 166L354 166M353 165L351 163M353 164L352 160M353 167L354 165M354 167L357 169M356 166L357 167M357 180L356 178M358 177L356 176M359 175L357 174M359 172L361 170M357 171L357 169M357 169L357 166M355 168L356 166M359 170L359 169M361 169L359 166M359 178L362 179M363 175L365 176M364 173L367 174M365 172L368 171M366 176L367 174M368 176L370 173M361 189L364 191M365 190L367 193M367 190L368 188M370 189L373 191M372 189L374 191M374 188L374 184M376 187L379 189M377 186L380 188M367 191L369 188M370 191L371 189M374 191L375 189M376 191L376 189M378 191L379 187M374 192L377 192M376 193L378 192M378 194L381 194M378 190L380 189M380 186L378 183M380 182L378 181M380 179L382 178M380 176L382 175M380 172L382 171M379 171L380 168M376 165L374 165M375 164L376 160M378 164L376 161M383 169L383 167M384 167L384 165M385 166L384 164M383 180L382 177M386 180L389 182M389 178L392 178M390 176L393 176M391 174L395 173M393 173L395 173M392 170L394 168M392 168L393 166M394 172L393 168M395 171L399 173M391 179L392 182M393 178L394 177M395 179L396 181M396 179L397 178M398 179L398 181M399 179L402 176M383 193L383 192M387 193L388 190M394 187L394 184M397 186L400 188M400 184L400 181M401 182L400 180M404 177L402 174M405 176L403 174M405 174L409 175M406 173L408 173M403 185L405 188M407 183L409 181M410 182L410 180M412 181L415 181M409 184L408 186M410 186L409 189M411 186L413 185M394 191L395 189M397 192L398 190M401 192L402 194M403 192L405 195M405 193L405 191M407 192L407 190M403 193L402 196M406 196L409 196M409 198L409 201M180 220L180 218M178 213L175 212M172 208L169 208M169 204L169 202M165 200L166 199M162 196L160 196M155 194L152 195M153 192L149 194M151 193L149 196M148 194L147 195M146 193L146 195M143 193L142 195M150 191L147 191M149 190L149 188M147 188L148 185M146 187L146 185M146 186L146 184M161 192L158 191M158 190L155 191M157 186L159 183M154 185L153 186M152 183L151 179M149 182L146 184M147 182L144 181M145 183L144 185M143 183L141 185M157 183L159 182M156 180L157 178M153 176L150 175M152 174L149 174M151 172L152 169M169 204L171 202M165 196L166 192M161 194L162 192M160 191L161 189M156 186L156 182M153 186L152 187M151 183L150 184M146 183L145 180M150 183L151 180M149 181L146 181M148 179L144 180M157 183L159 181M155 180L159 179M156 177L158 176M165 192L166 192M165 189L163 188M166 186L168 186M166 184L164 183M166 181L168 180M166 177L170 175M165 176L163 175M165 174L167 172M172 180L171 179M172 178L173 177M171 177L173 175M173 179L173 177M175 178L178 180M176 177L178 177M186 199L187 197M184 181L182 180M183 176L179 176M179 173L175 172M174 168L173 166M163 165L160 167M157 166L156 164M161 164L161 160M160 163L160 160M158 162L155 163M170 162L167 162M170 160L170 158M168 157L164 158M165 156L161 157M164 154L163 151M167 156L164 155M168 154L166 153M166 152L167 151M180 169L182 167M174 157L175 154M173 154L170 154M171 153L172 151M170 151L171 149M169 149L167 149M178 159L181 159M183 153L182 151M184 151L186 152M189 174L188 172M190 169L188 167M188 166L184 164M188 158L186 158M186 156L184 156M182 152L182 150M182 150L183 148M182 148L184 146M181 146L179 145M188 155L187 154M189 152L191 151M189 149L192 147M189 147L188 147M188 146L187 145M189 144L186 143M190 148L190 145M193 147L195 147M194 145L196 147M193 167L196 167M193 164L192 161M194 160L198 161M194 156L196 156M194 154L191 152M192 150L194 149M195 154L194 150M196 153L199 154M197 152L196 151M196 159L197 156M198 159L201 160M201 157L204 157M203 154L203 152M240 188L239 187M240 180L243 179M243 174L240 171M241 169L237 170M236 161L237 159M233 158L231 159M231 155L231 154M228 153L226 153M226 153L223 155M224 152L223 150M220 152L217 149M218 153L217 157M216 153L215 156M220 150L218 151M219 149L218 146M228 150L229 148M227 148L225 147M226 145L228 143M225 144L223 144M224 143L225 141M226 144L225 141M227 142L226 141M235 157L232 156M235 154L237 152M234 150L236 147M228 142L228 140M227 141L227 138M230 142L229 142M229 141L232 138M235 148L233 145M237 146L240 145M236 143L235 142M236 142L237 140M236 140L234 139M235 139L233 137M238 142L240 142M238 141L242 139M239 139L241 138M248 166L250 166M250 162L249 158M250 158L248 155M251 148L249 147M251 143L248 141M252 140L250 139M251 138L253 136M252 149L252 145M259 142L262 143M259 154L261 153M260 151L257 148M262 145L264 144M263 144L261 143M262 148L261 146M263 147L266 146M265 146L269 146M260 156L261 158M265 156L266 157M267 155L267 153M268 155L270 156M268 157L270 160M289 173L291 173M291 167L289 165M292 163L288 162M290 155L292 152M288 152L286 152M285 147L286 145M281 141L281 138M280 140L277 141M279 139L276 140M278 137L274 138M286 142L288 140M285 140L288 138M285 139L287 136M283 136L285 134M285 139L284 137M285 137L283 135M291 152L293 151M292 150L291 148M294 147L297 146M294 145L297 144M292 140L290 140M296 140L300 139M295 145L294 142M297 141L296 140M298 140L297 138M299 139L299 138M300 138L302 138M296 159L296 157M297 151L294 150M297 145L295 145M295 144L292 143M294 142L295 140M294 140L290 139M293 139L290 140M291 139L289 141M290 138L288 139M294 138L296 137M293 137L296 134M293 135L295 134M299 143L298 142M300 141L302 141M303 136L302 134M303 134L301 132M304 136L303 133M305 135L304 133M301 153L303 153M303 149L307 150M307 145L306 142M309 142L312 142M311 139L313 138M313 136L316 136M308 147L310 145M311 147L313 146M313 146L314 144M315 147L317 150M318 147L320 150M287 272L287 276M297 286L296 288M302 291L302 293M308 291L309 293M319 294L321 292M324 294L326 297M332 292L333 288M338 289L339 286M345 287L347 289M331 296L333 294M334 297L334 299M318 296L319 299M322 298L322 299M325 301L325 303M327 302L329 306M330 303L331 301M333 302L335 300M335 301L337 303M336 300L338 302M335 303L337 300M340 304L340 305M325 304L323 306M327 306L329 306M329 311L331 311M331 312L331 314M333 313L333 317M307 307L309 308M310 310L309 313M313 317L311 320M319 322L322 319M321 323L324 322M319 322L322 323M322 326L322 328M311 317L313 318M310 323L308 324M310 326L312 327M309 328L308 330M310 330L308 333M304 310L301 311M305 317L303 319M307 323L309 323M308 325L308 326M310 326L313 326M311 328L311 330M308 327L311 329M306 329L310 331M303 317L301 318M301 319L303 321M299 321L301 323M299 323L301 326M297 324L299 326M343 267L345 266M348 275L351 274M355 281L353 284M362 282L364 285M368 286L369 288M378 289L379 286M387 288L389 285M390 286L390 284M393 283L395 286M396 281L396 279M396 278L400 278M398 276L398 273M400 274L400 271M398 280L400 282M402 278L403 280M391 288L393 285M395 288L396 287M398 288L399 291M403 287L405 283M406 286L407 285M378 293L380 291M383 294L386 292M392 294L395 291M396 293L398 296M400 291L400 288M401 288L404 289M403 286L406 287M406 285L406 282M402 291L403 292M407 289L408 286M391 296L394 296M392 299L391 301M393 302L393 305M399 307L403 306M394 306L392 307M354 287L355 288M354 294L356 294M358 308L357 311M362 314L364 316M369 315L369 317M371 316L371 317M370 317L370 320M372 318L373 320M374 320L375 323M359 316L358 317M361 319L362 320M361 322L358 323M361 324L365 324M362 326L364 327M359 323L361 325M358 325L359 327M358 327L354 327M354 304L355 305M354 308L352 309M353 312L355 315M352 315L350 317M353 322L352 323M352 315L353 316M352 318L353 321M351 320L352 322M351 322L348 324M352 325L353 327M350 322L347 323M349 323L347 323M347 325L348 326M392 236L394 235M405 241L406 240M410 240L412 242M415 237L417 240M420 235L422 236M422 232L422 228M425 229L424 227M427 225L430 226M428 223L427 220M432 219L435 219M432 217L429 215M432 215L430 215M433 219L435 221M437 218L440 219M430 226L432 228M433 226L435 224M436 226L438 227M438 224L441 224M440 223L443 224M442 222L445 222M440 227L440 230M442 229L442 230M424 234L425 235M428 235L429 238M439 230L439 229M442 229L443 227M444 228L446 229M435 236L434 238M441 240L443 243M443 240L444 243M439 242L442 241M442 245L440 248M409 245L412 244M418 250L422 250M422 250L425 254M426 250L428 247M430 249L432 252M432 247L434 249M436 244L435 241M439 241L438 237M432 250L435 248M435 251L436 253M437 250L439 248M439 250L440 249M441 250L441 253M443 251L445 249M423 257L425 257M424 261L426 261M426 263L429 262M429 264L427 267M431 265L435 265M432 266L433 270M435 269L435 272M432 267L434 266M433 269L432 270M434 270L433 273M424 270L428 271M425 272L427 272M425 275L428 277M237 296L238 297M239 299L238 301M239 302L243 302M241 307L243 307M245 310L245 311M250 311L251 313M251 311L252 313M253 311L254 313M250 312L250 314M251 313L254 312M252 314L252 316M245 311L247 312M247 314L249 314M248 315L251 315M248 316L247 319M249 317L248 320M240 308L238 310M240 310L238 313M241 312L244 314M241 314L240 316M243 316L242 319M245 318L244 321M245 319L248 318M243 318L245 319M243 319L240 322M240 314L241 317M240 316L242 318M239 317L237 318M239 318L235 320M239 319L237 320M239 320L235 320M236 300L240 302M237 309L234 311M237 311L241 311M239 314L242 314M240 316L242 316M241 318L242 322M247 319L248 318M248 318L250 316M250 319L251 321M246 320L244 323M247 321L246 323M248 323L247 325M243 319L240 321M243 322L246 322M244 323L243 325M245 324L244 327M235 313L232 314M233 315L235 317M232 322L228 324M231 322L229 321M232 317L229 317M230 320L230 323M230 321L227 322M230 323L228 323M229 324L227 324M229 320L226 318M227 320L226 321M226 320L225 323M214 160L212 159M211 155L208 154M209 146L211 144M206 144L206 141M205 140L202 140M204 137L201 138M203 134L203 131M196 130L195 127M194 129L191 130M192 128L191 125M190 128L188 129M200 126L202 124M205 137L204 137M204 135L200 134M202 132L200 131M202 130L202 127M199 127L200 125M198 124L194 124M197 123L193 125M202 130L206 129M203 128L205 127M204 127L206 124M203 125L206 123M204 123L206 120M204 126L208 127M205 125L209 126M213 146L212 145M215 143L214 142M218 138L221 137M218 136L215 134M216 130L214 130M213 126L210 127M217 127L219 127M217 125L215 122M218 129L217 128M219 127L217 126M220 125L217 123M220 123L218 122M220 126L218 123M221 126L225 126M225 135L225 132M226 134L225 131M228 132L227 129M232 129L235 129M233 128L235 128M231 132L233 133M231 134L232 136M260 160L264 158M261 154L264 153M263 150L265 149M263 146L260 146M261 143L264 140M261 140L258 140M260 138L260 134M257 135L258 133M255 135L255 133M254 135L252 133M251 135L249 137M250 135L248 133M249 134L248 137M250 132L250 130M256 134L257 131M253 131L251 131M252 130L249 131M251 129L248 129M254 129L251 127M254 128L251 127M263 136L266 136M261 131L263 128M260 130L261 127M259 129L257 129M259 127L257 127M265 133L267 133M266 132L266 129M267 130L267 128M268 128L265 126M268 127L271 125M268 130L269 127M269 130L270 128M270 130L272 127M264 146L264 144M266 143L268 144M268 140L266 137M269 138L273 137M269 135L270 134M269 132L267 130M268 129L266 129M267 128L270 125M267 127L264 127M265 125L267 122M267 127L265 125M270 131L274 131M272 129L271 127M273 127L271 125M273 126L275 125M273 124L276 123M273 139L273 137M276 137L276 135M277 135L280 134M278 134L275 131M278 132L277 131M279 129L278 128M279 133L278 130M281 130L281 127M278 137L281 139M280 137L281 134M282 137L282 134M283 136L284 133M325 164L328 164M327 159L329 159M327 155L330 154M329 147L331 147M329 145L326 143M328 142L325 141M328 139L325 138M326 137L324 136M323 132L324 129M325 134L321 132M324 132L326 130M324 131L326 129M328 137L330 135M328 133L332 132M328 132L327 132M328 131L330 129M328 132L332 131M329 131L331 130M330 145L330 143M332 143L334 143M332 140L332 137M332 138L335 136M332 136L331 135M332 133L333 132M331 132L333 130M333 133L335 132M333 131L333 129M334 130L337 130M336 139L338 142M337 138L338 136M337 137L340 136M338 138L339 134M339 137L340 134M341 136L341 133M331 156L332 153M335 153L338 155M339 152L341 154M343 148L347 147M345 145L347 145M345 141L343 141M344 140L346 139M342 137L343 136M342 136L343 135M344 138L346 138M347 144L351 146M349 143L351 143M351 140L349 137M352 139L354 139M342 151L343 149M350 143L353 143M350 140L347 138M350 138L353 137M351 142L354 143M352 141L354 142M353 140L354 141M349 149L351 150M353 149L355 146M354 150L356 147M356 150L357 148M357 151L359 147M167 181L165 181M165 176L164 176M162 171L159 172M158 170L158 168M155 169L153 170M152 166L150 166M150 165L148 167M147 165L146 163M145 166L144 167M144 167L142 166M142 168L142 171M138 170L135 169M137 171L136 169M143 166L144 162M142 164L139 166M139 162L138 164M137 161L136 158M140 162L143 160M140 161L138 160M140 159L137 158M150 164L149 164M148 161L149 158M146 160L147 156M142 158L140 159M140 156L137 158M138 156L137 157M137 156L134 159M135 155L134 152M145 158L141 156M144 156L142 155M144 154L145 152M141 152L142 149M143 153L145 151M161 168L158 167M161 165L162 163M161 162L159 161M160 160L161 157M160 158L161 156M160 155L157 155M159 154L157 154M158 153L156 153M157 152L154 153M157 151L153 151M156 151L158 148M155 150L157 147M161 152L159 151M162 151L160 148M162 149L165 147M162 148L158 146M162 147L160 144M162 159L161 157M162 157L161 156M164 154L167 154M163 153L164 150M162 151L163 148M161 149L159 148M161 148L161 147M160 147L162 144M167 151L170 152M169 149L168 147M170 148L169 145M355 179L357 179M361 177L361 175M365 173L367 174M367 168L370 168M366 164L368 163M366 155L363 154M361 148L359 148M359 144L361 140M358 142L359 140M357 141L358 138M356 140L354 141M363 147L365 146M363 142L366 140M364 140L367 139M364 136L362 133M369 157L372 159M370 154L371 153M373 151L375 150M374 148L376 148M374 145L377 143M374 143L376 140M374 142L375 140M375 145L379 146M376 143L376 141M377 143L380 142M375 152L375 150M378 151L380 153M380 150L382 152M381 149L384 149M383 148L387 148M384 147L388 148M382 150L383 147M384 150L386 153M385 149L386 147M368 169L370 171M376 166L377 163M377 163L379 162M378 160L376 157M380 157L379 155M381 155L383 155M381 153L380 152M382 150L384 148M382 148L384 148M383 150L386 149M384 149L383 147M384 148L383 145M385 156L385 154M387 155L391 155M388 153L390 154M392 152L391 149M379 166L380 163M382 166L384 168M385 166L385 163M388 162L390 162M390 160L391 162M390 159L389 156M391 157L390 155M391 156L394 156M391 161L392 164M394 162L396 159M387 167L386 170M390 169L392 168M391 170L393 169M392 171L392 174M395 215L399 213M399 213L401 215M399 213L404 212M404 212L405 210M404 212L408 212M408 212L410 215M412 211L414 213M418 212L421 213M420 210L419 208M422 208L425 210M425 206L423 204M428 204L427 202M427 200L424 200M429 203L429 201M430 202L433 203M426 206L426 204M427 205L428 201M429 204L431 205M430 203L434 203M432 201L431 199M430 203L431 202M431 203L434 206M433 203L434 204M426 210L427 213M428 208L429 204M432 205L433 203M427 211L430 208M429 212L432 210M430 212L433 209M432 212L433 214M433 212L434 210M431 213L430 215M432 214L431 216M433 215L435 214M414 212L415 214M417 211L418 214M419 210L420 211M421 209L421 207M423 207L426 210M424 206L424 202M425 205L427 206M426 204L425 201M427 203L425 200M427 202L427 200M428 201L428 198M425 207L425 203M428 205L429 202M429 204L429 201M429 206L430 210M430 206L431 209M422 216L425 216M423 217L424 218M425 217L426 219M428 217L426 220M428 218L428 219M429 219L433 219M423 217L422 221M425 220L424 223M425 221L424 224M426 222L430 222M245 216L242 215M243 211L244 210M241 208L241 206M237 206L238 204M235 203L232 204M233 203L232 204M228 203L226 201M226 203L224 202M224 203L224 207M223 204L222 206M222 204L219 203M221 205L221 207M222 204L220 201M221 204L220 200M219 204L218 206M226 202L223 203M223 200L223 197M222 200L221 198M221 200L218 197M222 200L220 200M221 199L220 199M221 198L223 195M235 198L237 196M233 196L235 195M232 195L233 192M231 194L233 191M230 192L227 193M229 192L229 190M228 191L224 193M230 190L226 189M230 189L231 187M233 194L232 193M233 192L231 189M234 190L231 188M234 189L232 186M234 186L236 183M235 189L233 186M235 188L238 188M237 187L236 185M244 204L241 202M242 197L240 197M241 195L243 192M238 191L237 188M237 191L233 191M236 190L236 188M235 189L232 190M242 193L244 192M243 191L241 190M243 189L245 189M243 188L239 187M242 187L243 185M242 186L239 186M244 189L247 189M245 187L244 184M245 196L248 195M246 193L248 191M245 188L242 188M245 187L241 186M244 186L241 186M245 186L249 184M245 185L247 184M248 194L247 190M249 192L249 189M251 191L253 192M252 189L254 191M311 190L312 190M311 185L314 184M310 182L311 180M308 178L311 175M307 172L305 172M303 168L302 169M301 167L302 164M299 167L299 164M297 166L297 164M296 165L293 168M302 167L300 166M302 164L303 163M300 163L297 163M297 161L294 161M300 161L302 160M301 160L303 159M300 158L299 157M307 172L304 171M308 170L305 169M307 167L309 165M307 165L308 163M305 162L307 160M304 159L306 156M307 165L309 165M307 164L311 163M307 162L309 161M307 161L308 159M306 159L303 159M308 161L311 159M309 158L311 158M314 182L317 184M317 181L316 179M322 177L321 174M323 175L325 174M325 173L327 172M326 171L328 169M325 169L322 168M325 166L322 167M325 165L327 163M324 164L321 165M326 167L328 167M327 165L329 165M326 171L329 173M329 168L329 166M332 166L335 168M323 178L324 180M325 177L324 175M329 174L327 172M331 172L330 170M331 171L329 169M331 172L331 170M333 172L335 173M334 172L333 169M329 177L332 180M330 177L331 180M331 176L334 173M335 176L336 174M332 177L332 180M334 178L333 182M194 239L192 239M188 237L187 237M180 231L178 228M172 228L171 229M168 229L167 227M162 227L161 230M159 228L158 228M155 230L152 229M153 230L154 232M152 231L148 231M159 227L158 228M153 227L150 225M151 228L150 231M154 224L150 225M152 224L149 224M151 223L151 221M168 227L168 223M165 226L165 224M161 226L158 227M158 227L157 229M153 226L152 227M151 225L148 227M149 225L148 226M148 224L146 225M160 224L157 224M159 222L159 219M154 217L155 213M153 216L153 214M184 228L185 226M178 222L180 219M176 220L175 217M174 218L174 214M168 214L165 215M167 213L167 210M165 213L164 215M164 213L163 211M165 211L163 212M164 211L164 207M170 214L168 214M169 212L171 210M167 209L167 206M166 206L164 205M176 220L177 219M173 215L171 215M171 214L169 214M170 213L168 213M169 211L170 209M167 210L169 207M167 209L165 210M166 208L167 206M173 213L174 212M173 211L175 210M173 209L175 208M173 208L171 208M172 206L170 207M172 205L170 205M174 208L172 205M201 243L203 241M201 238L202 235M199 236L199 234M196 234L197 232M192 229L191 227M190 228L190 224M189 228L187 228M188 227L185 228M186 227L186 224M186 226L183 228M187 226L185 226M187 225L186 223M186 224L183 226M186 223L183 224M194 229L192 228M194 227L191 225M193 225L194 223M191 220L188 220M190 218L188 218M189 216L190 213M193 222L196 220M194 219L195 219M194 218L196 218M194 217L196 216M199 235L195 235M198 228L194 228M197 226L194 227M194 225L194 223M193 223L191 224M191 223L191 221M190 223L190 220M187 221L186 219M185 221L185 219M188 221L186 221M188 220L184 219M187 219L185 218M191 219L193 217M191 217L187 217M191 216L188 216M199 226L196 224M200 224L198 221M202 222L199 219M201 220L199 219M201 218L203 216M201 216L199 215M200 215L197 213M201 213L204 212M206 217L205 215M206 216L209 217M207 218L207 215M208 218L211 220M216 258L217 257M210 248L211 245M208 245L209 242M206 244L203 245M204 242L202 243M202 241L201 242M201 240L201 239M199 240L198 242M198 240L197 241M197 239L195 241M196 239L196 235M195 238L194 235M202 239L200 239M201 238L199 237M200 236L198 235M199 236L197 235M198 235L196 234M198 234L198 232M200 235L202 235M200 234L204 233M200 233L203 232M205 241L207 239M204 238L206 236M203 237L200 238M202 235L199 236M200 234L199 235M200 233L197 234M199 233L196 233M197 232L195 232M203 236L207 235M204 234L206 234M204 232L201 231M204 231L206 229M212 250L215 248M212 246L215 243M209 241L210 238M207 239L205 238M206 237L207 235M205 235L205 231M202 231L201 233M201 230L199 233M200 230L197 232M203 229L200 228M204 228L207 225M207 230L207 229M207 229L206 226M208 228L208 225M212 240L211 238M214 237L212 235M214 234L213 233M214 229L213 228M214 226L216 223M215 228L217 227M216 226L214 224M216 225L215 223M216 233L215 229M217 232L220 232M218 227L217 226M220 229L220 227M221 228L221 225M287 173L288 172M288 168L289 167M286 164L288 162M283 162L283 159M277 160L275 160M274 160L273 158M272 159L271 161M270 159L267 161M268 160L265 158M266 161L266 162M264 161L263 164M262 162L260 162M263 160L261 162M260 158L260 155M266 158L264 160M265 158L263 154M264 158L262 156M261 159L261 163M264 157L264 155M263 156L260 157M275 159L273 159M273 157L273 154M271 156L271 154M269 156L269 153M268 155L267 157M265 155L264 154M263 155L261 154M264 154L262 155M263 153L262 149M270 154L269 154M269 151L271 148M269 149L271 147M269 147L271 146M287 161L289 160M287 157L291 156M291 152L294 152M290 150L286 148M289 147L291 146M288 146L291 143M288 144L289 142M287 141L288 137M285 139L286 135M288 140L284 139M288 139L290 137M288 137L289 136M290 146L289 145M290 142L286 141M289 141L290 138M289 139L290 137M292 142L295 142M292 140L291 137M293 140L297 139M290 153L289 151M292 151L293 151M293 150L292 147M293 149L291 148M294 145L291 145M292 144L293 141M291 143L293 139M295 142L297 142M295 149L298 151M296 149L299 149M298 145L297 144M299 144L301 144M298 147L299 145M299 147L299 144M300 147L300 143M311 145L313 145M314 140L315 139M314 137L312 135M313 134L311 132M311 127L314 124M310 126L308 125M310 124L307 125M310 123L311 122M310 122L308 122M310 121L307 119M312 127L316 127M313 125L311 123M314 124L315 124M314 123L316 123M315 122L318 122M315 121L318 121M315 130L317 129M316 129L315 126M315 125L317 122M315 124L312 123M317 128L316 126M319 127L318 125M320 126L324 126M320 124L318 123M321 123L319 121M322 125L323 126M317 140L317 139M319 139L321 139M322 137L324 138M326 132L329 133M327 131L325 129M327 129L324 126M326 128L328 127M326 127L328 124M326 126L323 126M325 126L325 124M327 127L331 128M328 127L326 123M328 126L327 124M328 130L330 131M329 129L329 128M330 129L332 129M330 128L331 125M331 127L331 125M324 137L325 138M326 137L327 135M328 136L331 139M330 136L332 138M331 135L333 137M332 134L334 136M333 134L335 134M334 132L336 132M333 134L334 132M334 133L336 137M335 133L337 135M329 137L330 135M332 137L333 140M333 137L335 137M335 136L338 137M333 138L336 137M334 138L333 140M224 141L222 138M225 136L227 136M226 130L227 130M223 123L227 120M221 119L223 117M219 117L219 115M216 116L214 117M213 115L214 113M211 114L211 113M210 114L208 110M206 114L204 113M205 115L204 117M207 112L207 108M205 112L204 112M204 110L204 109M212 114L213 111M210 112L208 112M209 111L206 111M207 110L207 108M206 109L203 109M209 110L211 108M209 107L212 105M221 116L217 115M221 113L217 111M220 110L222 108M219 109L220 106M216 103L217 102M220 106L219 104M220 104L219 103M221 100L223 98M228 127L227 125M230 123L231 123M233 120L231 118M233 111L236 110M233 109L230 108M232 107L233 105M231 104L234 103M230 103L230 100M228 100L225 101M232 103L235 102M232 101L235 101M233 99L236 100M235 110L238 110M237 106L236 105M239 102L237 101M238 105L237 102M241 103L240 99M241 118L243 115M243 116L245 117M244 114L246 114M246 110L249 111M246 107L245 106M246 119L248 116M249 119L251 117M250 118L248 114M251 117L252 118M252 120L254 119M253 120L255 119M373 234L372 232M376 232L380 231M381 226L382 225M382 219L386 219M382 217L384 214M382 212L379 210M379 211L379 209M377 209L374 210M376 208L374 208M375 207L375 204M383 211L384 210M382 208L380 206M382 207L380 204M382 206L379 203M384 217L382 214M386 216L385 213M388 214L391 214M388 208L391 207M389 207L386 205M389 206L385 204M388 207L391 206M389 206L388 204M390 205L394 203M389 213L391 211M391 213L392 210M394 210L394 208M394 209L395 207M394 212L395 214M395 213L396 211M396 213L399 215M382 226L385 227M385 224L388 224M388 222L391 223M388 220L390 220M387 213L389 210M387 211L389 210M386 209L387 206M387 210L390 208M388 209L390 208M388 208L385 205M389 214L388 212M390 212L389 210M391 211L393 211M392 210L391 208M392 209L391 207M392 208L391 205M392 222L394 224M395 222L396 223M396 222L395 219M401 220L402 218M402 219L405 221M396 223L398 226M398 223L398 226M399 224L402 222M400 223L400 221M401 223L402 220M402 223L405 224M401 224L404 224M402 225L404 224M287 155L290 156M290 151L289 148M293 148L296 148M298 137L296 135M298 134L295 133M297 132L296 131M296 131L293 130M296 127L296 126M295 126L297 126M295 125L293 124M298 130L300 131M301 127L299 124M301 138L303 137M302 136L302 134M303 133L306 133M302 132L301 129M304 128L306 127M303 127L306 125M303 126L303 124M302 125L301 124M304 127L303 124M305 124L304 123M304 133L306 134M306 132L310 133M307 130L306 128M309 129L311 130M309 128L308 124M300 146L301 142M304 146L306 146M307 145L309 146M308 142L307 140M309 140L308 138M309 138L308 135M310 135L312 135M310 133L307 132M310 134L312 134M310 140L311 137M313 139L315 136M314 138L314 135M315 137L318 138M316 137L316 133M315 138L317 135M316 138L316 135M317 138L319 140M306 147L309 144M309 146L309 148M312 147L314 146M313 146L314 143M317 145L319 148M318 144L318 143M320 142L319 140M319 145L321 142M320 145L322 142M321 145L322 148M315 149L317 149M318 151L319 154M319 151L322 149M320 152L322 154M317 152L316 155M320 154L320 157M189 266L187 267M185 265L183 263M178 269L177 271M176 269L174 269M174 272L174 274M173 273L171 273M171 278L168 278M171 279L169 280M171 280L172 281M169 279L170 281M168 279L165 279M168 280L165 280M168 277L167 274M167 276L167 275M166 276L164 278M175 268L174 267M173 266L171 268M170 266L168 263M164 265L163 266M161 265L160 266M160 264L158 267M169 264L166 264M168 262L165 263M166 259L162 259M165 258L165 256M164 257L160 259M186 263L187 260M181 262L182 259M176 257L176 254M171 254L171 251M167 254L163 256M165 254L163 253M163 255L162 253M162 256L162 257M160 251L161 249M169 253L166 253M168 251L168 249M165 249L163 250M163 248L162 245M162 248L161 250M166 248L163 248M166 246L168 243M176 257L177 255M174 255L176 252M172 253L172 251M165 250L165 247M164 248L160 249M171 251L174 249M171 249L170 248M171 247L173 246M172 245L173 243M172 244L173 242M172 242L173 240M172 245L175 244M173 244L176 242M276 224L277 223M274 219L273 218M275 214L278 213M275 208L277 205M275 204L272 204M274 202L272 203M273 200L271 199M270 198L268 199M268 198L267 196M266 197L263 199M265 197L263 198M263 197L262 194M262 197L261 195M265 196L261 196M264 195L261 196M263 194L263 192M269 193L267 192M268 192L270 190M267 191L265 191M275 202L273 201M276 201L272 200M275 197L277 195M274 194L276 193M274 193L276 192M274 192L276 189M277 198L279 198M277 197L279 197M278 195L281 193M279 193L276 191M280 195L280 191M277 206L279 206M278 200L280 199M278 198L279 196M277 195L274 193M277 193L273 192M276 190L277 188M277 187L275 186M277 186L279 185M277 193L276 192M278 191L281 191M279 190L277 186M279 187L280 184M278 186L281 184M281 186L284 185M282 200L282 196M285 199L288 199M286 197L290 197M288 194L291 193M288 191L285 189M292 194L293 195M286 197L286 195M290 194L292 194M292 192L291 189M293 194L294 193M215 142L212 140M216 138L214 136M217 130L214 129M216 123L212 122M214 121L216 118M212 120L211 120M210 119L212 116M209 119L209 116M208 117L205 120M206 116L204 117M204 117L202 115M204 118L202 116M205 114L203 115M205 113L207 111M210 116L207 115M209 115L206 114M208 114L210 113M208 113L209 111M216 121L219 121M219 117L220 116M218 116L221 114M218 114L220 112M217 112L215 111M217 111L214 111M216 110L216 108M215 109L212 109M218 111L221 109M218 110L216 109M218 109L220 108M220 116L220 115M221 115L220 113M222 113L222 110M223 112L223 110M224 112L223 110M220 132L222 132M223 124L226 124M224 120L226 120M225 116L226 115M225 115L223 112M225 114L227 114M225 120L229 121M226 118L229 118M227 117L229 116M228 115L224 113M228 117L230 119M229 116L229 114M224 125L225 123M226 124L228 125M228 123L227 119M230 121L233 123M232 119L230 118M232 119L233 117M233 119L232 116M230 123L232 126M233 123L235 124M237 122L237 121M235 123L237 121M238 123L239 122M354 170L357 171M359 167L361 168M363 163L366 165M366 160L369 160M370 158L369 155M372 154L374 155M375 145L374 143M375 142L377 140M375 140L371 140M372 136L369 136M371 135L372 131M369 133L369 130M374 136L372 133M374 134L371 132M376 143L379 142M376 141L378 140M377 139L380 139M378 137L380 137M378 136L376 134M375 155L376 153M378 155L379 153M381 154L383 155M382 152L383 150M386 150L387 151M387 150L391 151M389 150L390 150M390 148L393 150M383 155L385 152M385 156L386 155M388 156L389 158M390 157L392 154M391 157L392 160M372 161L372 159M376 160L376 158M377 157L380 158M380 156L379 154M383 154L386 156M385 150L387 150M386 147L389 149M387 146L385 144M387 144L385 141M388 142L391 141M388 147L390 148M390 146L390 144M391 146L392 144M385 154L386 152M388 153L388 150M392 152L389 149M392 150L394 150M392 153L394 156M394 153L395 156M396 153L398 151M378 160L380 157M381 160L383 158M384 160L386 163M386 160L387 156M387 160L390 163M392 159L393 160M393 159L394 161M386 160L387 164M387 161L389 159M390 162L392 160M392 163L394 161M354 258L354 257M359 258L361 259M361 255L362 255M364 253L365 253M365 250L364 249M365 248L368 247M365 245L362 243M365 242L369 240M365 241L363 239M365 239L363 239M364 238L366 235M363 237L361 237M362 236L363 233M362 235L364 233M363 235L366 232M363 234L362 233M367 241L367 239M368 239L367 236M370 238L373 239M370 237L370 234M372 235L372 233M367 248L369 248M371 246L375 247M373 242L371 240M373 239L372 236M375 237L377 236M373 245L376 243M375 245L378 248M378 243L379 242M380 242L383 244M378 244L380 243M380 245L381 247M381 245L383 247M367 259L369 262M370 261L372 260M373 261L374 262M381 259L384 259M382 256L380 255M381 254L384 254M382 253L383 252M384 256L386 258M385 256L385 254M380 261L380 263M381 262L383 259M385 262L385 261M386 263L386 264M387 263L389 262M371 264L373 264M373 267L372 270M374 269L373 273M375 271L377 270M377 272L380 271M380 272L381 270M381 272L383 274M382 272L383 269M379 273L382 274M380 274L378 277M381 275L385 275M374 272L374 274M375 274L377 274M376 276L375 280M378 279L378 282M199 208L196 207M200 203L198 202M197 197L200 195M196 194L193 193M195 192L193 193M194 191L194 187M192 189L193 188M191 188L189 189M189 188L187 190M188 187L184 189M187 188L185 190M185 187L183 190M192 188L194 185M191 186L188 186M190 184L190 182M190 184L189 182M197 192L194 191M196 190L193 189M194 188L191 187M193 188L193 186M192 186L193 183M189 184L186 186M188 184L187 185M190 183L187 184M195 187L193 184M195 185L199 184M196 183L197 180M197 183L196 181M197 182L201 182M197 181L200 180M199 200L197 199M199 197L202 195M199 189L197 189M199 185L196 185M198 183L199 181M197 181L194 182M196 180L194 181M195 179L196 176M197 180L200 178M198 179L200 178M198 178L200 177M200 185L203 185M201 181L199 180M201 180L198 179M201 179L202 177M202 181L202 179M203 180L202 178M204 179L203 177M200 192L200 190M201 190L203 190M203 189L202 186M204 188L202 186M204 186L204 184M205 185L208 185M206 183L203 180M207 184L207 181M208 183L209 184M205 188L207 191M206 188L208 186M208 188L209 186M208 187L208 185M209 186L209 184M210 185L213 185M211 189L212 191M386 279L386 277M390 276L392 273M393 273L394 274M398 270L399 267M400 268L403 268M402 266L404 265M402 264L401 261M403 262L406 261M404 259L400 258M403 258L401 256M403 256L405 254M403 255L400 254M403 261L402 258M405 258L402 256M405 257L407 254M404 256L402 254M406 258L405 255M406 257L408 258M407 257L410 257M402 266L402 263M406 265L406 262M408 264L411 266M409 263L411 265M410 262L409 259M411 259L410 258M412 258L410 255M412 262L413 259M413 261L414 260M408 265L409 263M410 265L412 263M411 266L412 269M412 265L415 267M413 265L413 262M413 267L414 270M405 270L407 271M408 270L410 267M410 270L414 272M412 269L412 267M414 268L414 265M416 267L418 269M416 265L416 263M417 267L418 265M418 267L421 269M419 267L421 265M413 270L414 267M415 271L416 268M417 270L419 273M419 271L422 269M421 271L422 269M409 276L409 279M411 276L411 279M414 277L416 275M416 277L417 275M418 277L420 275M410 277L411 277M411 278L411 281M412 279L412 280M413 280L415 280M414 280L412 283M282 190L285 191M285 185L288 185M287 182L286 180M288 180L290 179M288 178L291 177M288 176L286 175M287 175L289 173M286 174L288 172M285 173L286 171M284 172L283 172M284 170L285 168M283 169L280 169M285 172L287 170M286 171L287 170M286 170L289 169M288 175L286 172M288 173L285 172M288 172L286 169M288 171L284 170M288 170L291 168M289 171L289 170M290 171L289 169M292 176L294 176M295 172L293 170M295 172L297 174M296 172L298 173M297 171L300 173M296 175L297 172M297 174L299 176M297 174L298 170M298 174L300 171M285 190L285 188M289 186L289 182M290 184L290 182M290 182L294 181M291 179L292 178M290 175L293 173M290 174L293 172M291 173L289 172M292 179L295 182M294 178L296 180M295 178L298 177M296 177L295 174M296 176L299 177M295 178L296 181M291 186L293 183M293 185L296 187M295 184L297 182M297 183L299 180M300 181L300 179M301 180L303 182M297 184L298 182M298 184L299 181M300 183L301 186M301 184L303 186M302 185L304 182M175 149L176 148M176 143L174 142M174 138L176 134M172 135L169 134M168 129L169 126M165 128L165 124M163 126L163 123M161 124L159 126M160 124L157 126M154 123L153 122M154 123L151 125M155 122L155 121M158 118L156 117M158 117L156 117M167 126L171 124M168 121L166 120M168 120L170 118M167 118L168 117M166 116L163 115M165 114L166 111M167 115L165 112M173 115L171 114M173 114L176 113M174 116L174 112M175 116L176 117M173 133L175 132M173 128L170 127M172 124L175 122M171 121L168 122M168 119L164 120M162 115L161 112M160 114L157 116M158 113L156 115M156 113L155 114M154 113L153 112M158 113L159 110M158 111L158 108M156 111L157 108M167 113L169 113M166 109L167 107M163 104L165 101M166 107L165 105M172 120L171 118M174 118L177 117M176 115L178 115M175 113L177 110M175 110L176 109M175 108L172 107M174 106L172 107M172 103L169 103M176 106L179 106M177 105L180 104M177 103L177 102M178 111L181 111M180 110L179 107M183 107L182 105" stroke="#4e4440" stroke-width="0.75" fill="none" opacity="0.9"/>
<path d="M190 256L186 253M186 253L182 251M182 251L179 247M179 247L175 249M175 249L172 250M172 250L169 249M169 249L167 250M167 250L165 252M165 252L163 253M163 253L161 254M161 254L160 255M160 255L158 256M169 249L167 249M167 249L165 247M165 247L163 246M163 246L161 245M161 245L159 244M159 244L158 243M179 247L177 244M177 244L176 241M176 241L174 238M174 238L172 236M172 236L170 236M170 236L167 235M167 235L165 235M165 235L164 234M164 234L162 234M167 235L166 234M166 234L165 233M165 233L163 232M174 238L173 236M173 236L172 233M172 233L172 230M172 230L171 229M171 229L170 227M170 227L168 226M172 230L172 229M172 229L172 227M172 227L172 226M190 256L189 251M189 251L187 246M187 246L184 242M184 242L183 238M183 238L182 235M182 235L179 233M179 233L177 232M177 232L175 231M175 231L173 230M173 230L171 229M171 229L169 229M169 229L167 229M173 230L172 228M172 228L171 226M171 226L170 225M179 233L178 231M178 231L177 229M177 229L176 227M176 227L176 225M176 225L176 224M176 224L176 222M184 242L185 238M185 238L185 235M185 235L183 232M183 232L182 229M182 229L182 226M182 226L181 224M181 224L180 222M180 222L179 221M179 221L178 219M183 232L185 229M185 229L186 227M186 227L187 225M187 225L188 223M188 223L188 221M188 221L187 219M187 225L188 223M188 223L188 221M188 221L190 220M210 238L207 234M207 234L202 231M202 231L198 227M198 227L193 225M193 225L190 222M190 222L187 219M187 219L185 217M185 217L183 215M183 215L180 214M180 214L178 214M178 214L176 213M176 213L174 214M180 214L179 213M179 213L178 211M178 211L176 209M187 219L185 216M185 216L182 214M182 214L179 212M179 212L177 212M177 212L176 211M176 211L173 211M179 212L178 211M178 211L176 209M176 209L175 207M198 227L197 222M197 222L197 218M197 218L196 214M196 214L193 211M193 211L191 209M191 209L190 206M190 206L188 205M188 205L186 203M186 203L184 202M190 206L189 203M189 203L188 201M188 201L187 198M196 214L197 210M197 210L197 207M197 207L196 204M196 204L195 202M195 202L193 200M193 200L191 199M196 204L198 202M198 202L200 200M200 200L201 198M210 238L210 233M210 233L213 227M213 227L214 222M214 222L216 218M216 218L215 215M215 215L214 211M214 211L213 208M213 208L214 206M214 206L213 203M213 203L213 201M213 201L212 199M212 199L212 196M213 203L214 202M214 202L216 200M216 200L216 198M214 211L215 208M215 208L216 206M216 206L218 204M218 204L218 202M218 202L219 200M219 200L219 199M218 204L220 203M220 203L222 202M222 202L224 202M214 222L217 219M217 219L221 215M221 215L223 211M223 211L224 209M224 209L225 206M225 206L226 203M226 203L226 201M226 201L227 199M227 199L227 197M226 203L228 201M228 201L229 200M229 200L231 198M223 211L226 210M226 210L227 207M227 207L229 204M229 204L231 203M231 203L233 201M233 201L234 200M229 204L231 204M231 204L233 202M233 202L235 201M240 229L241 224M241 224L241 219M241 219L241 214M241 214L238 212M238 212L237 209M237 209L235 207M235 207L234 205M234 205L232 204M232 204L229 203M229 203L228 203M228 203L226 202M226 202L225 202M229 203L228 202M228 202L226 201M226 201L226 199M235 207L236 205M236 205L236 202M236 202L236 200M236 200L235 198M235 198L235 196M235 196L234 194M236 200L237 198M237 198L238 196M238 196L238 195M241 214L240 211M240 211L242 209M242 209L244 206M244 206L244 204M244 204L245 202M245 202L244 200M244 200L243 199M243 199L243 197M243 197L242 196M244 200L244 198M244 198L246 197M246 197L246 196M244 206L244 204M244 204L245 202M245 202L245 200M245 200L246 198M246 198L247 197M247 197L247 195M240 229L241 225M241 225L245 221M245 221L248 218M248 218L248 214M248 214L249 211M249 211L251 208M251 208L250 206M250 206L249 204M249 204L248 202M248 202L248 200M248 200L247 199M247 199L247 197M248 202L247 200M247 200L247 199M247 199L247 197M251 208L252 205M252 205L253 203M253 203L255 202M255 202L256 201M256 201L256 199M256 199L257 198M255 202L257 202M257 202L259 202M259 202L260 203M248 218L251 217M251 217L253 215M253 215L255 212M255 212L257 211M257 211L258 210M258 210L259 208M259 208L259 207M259 207L259 206M259 206L259 204M259 208L261 208M261 208L262 208M262 208L263 207M255 212L257 212M257 212L260 212M260 212L262 211M262 211L263 211M263 211L265 211M265 211L266 211M261 218L260 213M260 213L258 208M258 208L257 202M257 202L255 199M255 199L252 195M252 195L250 193M250 193L248 191M248 191L245 190M245 190L243 188M243 188L241 187M241 187L239 187M239 187L238 185M250 193L249 190M249 190L247 188M247 188L245 185M245 185L245 183M245 183L244 181M244 181L243 179M257 202L258 198M258 198L260 194M260 194L260 190M260 190L259 188M259 188L258 185M258 185L257 182M257 182L256 180M256 180L255 178M255 178L253 176M257 182L258 180M258 180L258 178M258 178L258 175M260 190L262 188M262 188L265 186M265 186L267 184M267 184L268 182M268 182L270 180M270 180L270 178M267 184L270 183M270 183L272 183M272 183L275 183M261 218L263 214M263 214L266 209M266 209L268 204M268 204L267 201M267 201L267 198M267 198L264 195M264 195L262 194M262 194L260 193M260 193L259 191M259 191L258 190M258 190L258 188M258 188L257 187M259 191L258 190M258 190L257 188M257 188L256 187M264 195L264 193M264 193L264 190M264 190L263 188M263 188L263 186M263 186L263 184M263 184L264 182M268 204L271 202M271 202L275 201M275 201L278 199M278 199L279 196M279 196L281 193M281 193L283 191M283 191L282 188M282 188L283 186M283 186L284 184M283 191L284 189M284 189L285 188M285 188L287 187M278 199L281 198M281 198L283 195M283 195L286 194M286 194L287 192M287 192L287 190M287 190L288 188M286 194L288 195M288 195L290 195M290 195L292 195M306 206L305 202M305 202L307 198M307 198L306 194M306 194L305 192M305 192L303 189M303 189L303 186M303 186L301 185M301 185L300 184M300 184L298 183M298 183L297 182M297 182L297 181M297 181L296 179M303 186L302 184M302 184L302 183M302 183L302 181M302 181L301 180M301 180L301 178M301 178L299 178M302 181L301 179M301 179L302 178M302 178L302 177M306 194L306 191M306 191L308 189M308 189L308 186M308 186L307 184M307 184L307 182M307 182L308 181M308 181L307 179M307 179L307 178M307 178L306 177M308 181L308 179M308 179L308 178M308 178L309 177M308 186L310 184M310 184L310 182M310 182L311 180M311 180L311 179M311 179L311 177M311 177L311 176M311 180L311 179M311 179L312 177M312 177L313 177M306 206L308 203M308 203L312 201M312 201L315 198M315 198L316 196M316 196L318 194M318 194L320 192M320 192L320 190M320 190L320 188M320 188L321 187M321 187L320 185M320 185L320 184M320 184L320 183M320 192L322 191M322 191L324 191M324 191L325 189M325 189L326 188M326 188L327 187M327 187L328 186M325 189L326 189M326 189L327 189M327 189L329 188M315 198L317 196M317 196L320 196M320 196L322 194M322 194L324 194M324 194L325 193M325 193L327 192M327 192L328 191M328 191L329 191M329 191L330 190M322 194L324 194M324 194L325 195M325 195L327 194M327 194L328 194M328 194L329 194M329 194L330 193M327 194L328 195M328 195L329 196M329 196L330 196M330 212L333 206M333 206L338 202M338 202L344 198M344 198L346 194M346 194L345 189M345 189L345 185M345 185L344 181M344 181L343 178M343 178L340 175M340 175L339 173M339 173L337 171M337 171L336 169M336 169L334 169M334 169L332 168M332 168L330 168M336 169L334 168M334 168L333 166M333 166L333 165M340 175L342 173M342 173L341 170M341 170L342 167M342 167L341 165M341 165L341 163M341 163L340 161M342 167L344 166M344 166L345 164M345 164L346 163M345 185L346 181M346 181L346 177M346 177L346 174M346 174L346 171M346 171L347 169M347 169L346 167M346 167L346 165M346 165L345 163M345 163L344 162M346 167L346 165M346 165L346 163M346 163L347 162M346 174L347 172M347 172L349 169M349 169L351 168M351 168L351 166M351 166L353 165M353 165L353 164M351 168L353 167M353 167L354 167M354 167L356 166M344 198L346 194M346 194L350 191M350 191L354 189M354 189L355 186M355 186L358 183M358 183L357 180M357 180L358 177M358 177L359 175M359 175L359 172M359 172L357 171M357 171L357 169M357 169L355 168M359 172L359 170M359 170L361 169M361 169L361 167M357 180L359 178M359 178L361 177M361 177L363 175M363 175L364 173M364 173L365 172M365 172L366 170M363 175L365 175M365 175L366 176M366 176L368 176M354 189L358 189M358 189L361 189M361 189L365 190M365 190L367 190M367 190L370 189M370 189L372 189M372 189L374 188M374 188L376 187M376 187L377 186M365 190L367 191M367 191L370 191M370 191L372 192M372 192L374 191M374 191L376 191M376 191L378 191M372 192L374 192M374 192L376 193M376 193L378 194M365 205L368 200M368 200L372 196M372 196L378 194M378 194L378 190M378 190L380 186M380 186L380 182M380 182L380 179M380 179L380 176M380 176L380 172M380 172L379 171M379 171L378 169M378 169L377 167M377 167L377 166M377 166L376 165M376 165L375 164M377 167L378 166M378 166L378 164M378 164L379 163M380 172L381 170M381 170L383 169M383 169L384 167M384 167L385 166M385 166L385 164M385 164L386 163M380 182L383 180M383 180L386 180M386 180L389 178M389 178L390 176M390 176L391 174M391 174L393 173M393 173L393 171M393 171L392 170M392 170L392 168M393 173L394 172M394 172L395 171M395 171L396 170M389 178L391 179M391 179L393 178M393 178L395 179M395 179L396 179M396 179L398 179M398 179L399 179M378 194L383 193M383 193L387 193M387 193L391 190M391 190L394 187M394 187L397 186M397 186L400 184M400 184L401 182M401 182L402 180M402 180L404 177M404 177L405 176M405 176L405 174M405 174L406 173M400 184L403 185M403 185L405 184M405 184L407 183M407 183L409 183M409 183L410 182M410 182L412 181M407 183L409 184M409 184L410 186M410 186L411 186M391 190L394 191M394 191L397 192M397 192L401 192M401 192L403 192M403 192L405 193M405 193L407 192M407 192L408 191M408 191L410 191M410 191L411 190M401 192L403 193M403 193L405 194M405 194L406 196M406 196L407 198M407 198L409 198M409 198L410 198M406 196L407 198M407 198L408 199M408 199L410 200M172 208L169 204M169 204L165 200M165 200L162 196M162 196L159 195M159 195L155 194M155 194L153 192M153 192L151 193M151 193L148 194M148 194L146 193M146 193L145 193M145 193L143 193M143 193L142 193M153 192L150 191M150 191L149 190M149 190L147 188M147 188L146 187M146 187L146 186M146 186L144 185M162 196L161 192M161 192L158 190M158 190L157 186M157 186L154 185M154 185L152 183M152 183L149 182M149 182L147 182M147 182L145 183M145 183L143 183M149 182L147 182M147 182L145 181M145 181L143 181M157 186L157 183M157 183L156 180M156 180L154 177M154 177L153 176M153 176L152 174M152 174L151 172M172 208L169 204M169 204L165 201M165 201L165 196M165 196L161 194M161 194L160 191M160 191L158 188M158 188L156 186M156 186L153 186M153 186L151 183M151 183L149 183M149 183L148 183M148 183L146 183M151 183L150 183M150 183L149 181M149 181L148 179M158 188L158 185M158 185L157 183M157 183L155 181M155 181L155 180M155 180L156 178M156 178L156 177M165 196L165 192M165 192L165 189M165 189L166 186M166 186L166 184M166 184L166 181M166 181L166 179M166 179L166 177M166 177L165 176M165 176L165 174M166 186L168 184M168 184L170 182M170 182L172 180M172 180L172 178M172 178L171 177M171 177L172 175M172 180L173 179M173 179L175 178M175 178L176 177M190 205L186 199M186 199L185 191M185 191L187 184M187 184L184 181M184 181L183 176M183 176L179 173M179 173L177 169M177 169L174 168M174 168L171 165M171 165L168 164M168 164L166 165M166 165L163 165M163 165L161 166M161 166L159 166M159 166L157 166M163 165L161 164M161 164L160 163M160 163L158 162M171 165L170 162M170 162L170 160M170 160L168 157M168 157L166 157M166 157L165 156M165 156L164 154M168 157L167 156M167 156L168 154M168 154L166 152M179 173L180 169M180 169L178 165M178 165L177 162M177 162L176 159M176 159L174 157M174 157L173 154M173 154L171 153M171 153L170 151M170 151L169 149M177 162L178 159M178 159L178 157M178 157L180 155M180 155L180 153M180 153L179 152M179 152L178 150M180 155L181 154M181 154L183 153M183 153L184 151M187 184L189 179M189 179L189 174M189 174L190 169M190 169L188 166M188 166L188 162M188 162L188 158M188 158L186 156M186 156L184 154M184 154L182 152M182 152L182 150M182 150L182 148M182 148L181 146M188 158L188 155M188 155L189 152M189 152L189 149M189 149L189 147M189 147L188 146M188 146L189 144M189 149L190 148M190 148L193 147M193 147L194 145M190 169L193 167M193 167L193 164M193 164L194 160M194 160L193 158M193 158L194 156M194 156L194 154M194 154L193 153M193 153L193 151M193 151L192 150M194 154L195 154M195 154L196 153M196 153L197 152M194 160L196 159M196 159L198 159M198 159L200 158M200 158L201 157M201 157L202 155M202 155L203 154M240 195L240 188M240 188L240 180M240 180L243 174M243 174L241 169M241 169L239 165M239 165L236 161M236 161L233 158M233 158L231 155M231 155L228 153M228 153L226 153M226 153L224 152M224 152L221 151M221 151L220 152M220 152L218 153M218 153L216 153M221 151L220 150M220 150L219 149M219 149L218 148M228 153L228 150M228 150L227 148M227 148L226 145M226 145L225 144M225 144L224 143M224 143L223 142M226 145L226 144M226 144L227 142M227 142L227 141M236 161L235 157M235 157L235 154M235 154L234 150M234 150L232 149M232 149L231 146M231 146L231 144M231 144L230 143M230 143L228 142M228 142L227 141M231 144L230 142M230 142L229 141M229 141L228 139M234 150L235 148M235 148L237 146M237 146L236 143M236 143L236 142M236 142L236 140M236 140L235 139M236 143L238 142M238 142L238 141M238 141L239 139M243 174L247 171M247 171L248 166M248 166L250 162M250 162L250 158M250 158L250 155M250 155L250 151M250 151L251 148M251 148L251 146M251 146L251 143M251 143L251 142M251 142L252 140M252 140L251 138M250 151L252 149M252 149L253 147M253 147L255 145M255 145L256 144M256 144L258 143M258 143L259 142M250 162L253 160M253 160L256 158M256 158L258 156M258 156L259 154M259 154L260 151M260 151L261 149M261 149L261 147M261 147L262 145M262 145L263 144M261 149L262 148M262 148L263 147M263 147L265 146M258 156L260 156M260 156L263 157M263 157L265 156M265 156L267 155M267 155L268 155M268 155L270 155M265 156L267 156M267 156L268 157M268 157L270 158M285 185L289 180M289 180L289 173M289 173L291 167M291 167L292 163M292 163L289 159M289 159L290 155M290 155L288 152M288 152L287 149M287 149L285 147M285 147L284 145M284 145L282 143M282 143L281 141M281 141L280 140M280 140L279 139M279 139L278 137M285 147L286 145M286 145L286 142M286 142L285 140M285 140L285 139M285 139L284 138M284 138L283 136M285 140L285 139M285 139L285 137M285 137L286 135M290 155L291 152M291 152L292 150M292 150L294 147M294 147L294 145M294 145L294 143M294 143L294 141M294 141L293 141M293 141L292 140M292 140L291 138M294 141L295 141M295 141L296 140M296 140L296 138M294 147L295 145M295 145L297 144M297 144L297 141M297 141L298 140M298 140L299 139M299 139L300 138M291 167L293 163M293 163L296 159M296 159L298 154M298 154L297 151M297 151L297 148M297 148L297 145M297 145L295 144M295 144L294 142M294 142L294 140M294 140L293 139M293 139L291 139M291 139L290 138M294 140L294 138M294 138L293 137M293 137L293 135M297 145L299 143M299 143L300 141M300 141L301 139M301 139L302 137M302 137L303 136M303 136L303 134M301 139L302 137M302 137L304 136M304 136L305 135M298 154L301 153M301 153L303 149M303 149L306 147M306 147L307 145M307 145L309 142M309 142L310 141M310 141L311 139M311 139L312 137M312 137L313 136M306 147L308 147M308 147L311 147M311 147L313 146M313 146L315 147M315 147L316 147M316 147L318 147M280 268L287 272M287 272L294 278M294 278L297 286M297 286L302 291M302 291L308 291M308 291L315 293M315 293L319 294M319 294L324 294M324 294L329 293M329 293L332 292M332 292L335 291M335 291L338 289M338 289L341 288M341 288L343 287M343 287L345 287M329 293L331 296M331 296L334 297M334 297L337 298M337 298L339 299M339 299L341 301M341 301L342 302M315 293L318 296M318 296L322 298M322 298L325 301M325 301L327 302M327 302L330 303M330 303L333 302M333 302L335 301M335 301L336 300M336 300L338 299M333 302L335 303M335 303L338 303M338 303L340 304M325 301L325 304M325 304L327 306M327 306L328 309M328 309L329 311M329 311L331 312M331 312L333 313M297 286L299 292M299 292L303 297M303 297L305 303M305 303L307 307M307 307L310 310M310 310L311 314M311 314L313 317M313 317L315 319M315 319L318 320M318 320L319 322M319 322L321 323M321 323L322 325M318 320L319 322M319 322L321 324M321 324L322 326M311 314L311 317M311 317L311 320M311 320L310 323M310 323L310 326M310 326L309 328M309 328L310 330M305 303L303 306M303 306L304 310M304 310L304 314M304 314L305 317M305 317L307 320M307 320L307 323M307 323L308 325M308 325L310 326M310 326L311 328M307 323L308 325M308 325L308 327M308 327L306 329M304 314L303 317M303 317L301 319M301 319L299 321M299 321L299 323M299 323L297 324M297 324L296 325M335 262L343 267M343 267L348 275M348 275L355 281M355 281L362 282M362 282L368 286M368 286L374 290M374 290L378 289M378 289L382 287M382 287L387 288M387 288L390 286M390 286L393 283M393 283L396 281M396 281L396 278M396 278L398 276M398 276L400 274M396 281L398 280M398 280L400 279M400 279L402 278M387 288L391 288M391 288L395 288M395 288L398 288M398 288L401 288M401 288L403 287M403 287L406 286M374 290L378 293M378 293L383 294M383 294L388 294M388 294L392 294M392 294L396 293M396 293L400 291M400 291L401 288M401 288L403 286M403 286L406 285M400 291L402 291M402 291L405 290M405 290L407 289M388 294L391 296M391 296L392 299M392 299L393 302M393 302L396 303M396 303L397 305M397 305L399 307M393 302L393 304M393 304L394 306M394 306L394 309M355 281L354 287M354 287L354 294M354 294L355 300M355 300L356 304M356 304L358 308M358 308L359 312M359 312L362 314M362 314L365 315M365 315L369 315M369 315L371 316M371 316L373 316M373 316L375 317M369 315L370 317M370 317L372 318M372 318L374 320M359 312L359 316M359 316L361 319M361 319L361 322M361 322L361 324M361 324L362 326M362 326L363 328M361 322L359 323M359 323L358 325M358 325L358 327M355 300L354 304M354 304L354 308M354 308L353 312M353 312L352 315M352 315L354 317M354 317L353 320M353 320L353 322M353 322L354 324M354 324L355 325M353 312L352 315M352 315L352 318M352 318L351 320M351 320L351 322M351 322L351 324M351 324L352 325M351 320L350 322M350 322L349 323M349 323L347 325M385 235L392 236M392 236L397 241M397 241L405 241M405 241L410 240M410 240L415 237M415 237L420 235M420 235L422 232M422 232L425 229M425 229L427 225M427 225L428 223M428 223L430 221M430 221L432 219M432 219L432 217M432 217L432 215M432 215L432 214M432 219L433 219M433 219L435 219M435 219L437 218M427 225L430 226M430 226L433 226M433 226L436 226M436 226L438 224M438 224L440 223M440 223L442 222M436 226L438 227M438 227L440 227M440 227L442 229M420 235L424 234M424 234L428 235M428 235L432 235M432 235L434 233M434 233L436 231M436 231L439 230M439 230L441 230M441 230L442 229M442 229L444 228M432 235L435 236M435 236L436 238M436 238L439 239M439 239L441 240M441 240L443 240M443 240L445 241M439 239L439 242M439 242L440 243M440 243L442 245M405 241L409 245M409 245L414 247M414 247L418 250M418 250L422 250M422 250L426 250M426 250L430 249M430 249L432 247M432 247L433 245M433 245L436 244M436 244L437 242M437 242L439 241M439 241L440 239M430 249L432 250M432 250L435 251M435 251L437 250M437 250L439 250M439 250L441 250M441 250L443 251M418 250L421 253M421 253L423 257M423 257L424 261M424 261L426 263M426 263L429 264M429 264L431 265M431 265L432 266M432 266L434 268M434 268L435 269M431 265L432 267M432 267L433 269M433 269L434 270M424 261L424 264M424 264L423 267M423 267L424 270M424 270L425 272M425 272L426 273M426 273L425 275M235 280L236 285M236 285L236 291M236 291L237 296M237 296L239 299M239 299L239 302M239 302L240 305M240 305L241 307M241 307L243 309M243 309L245 310M245 310L246 311M246 311L248 311M248 311L250 311M250 311L251 311M251 311L252 311M252 311L253 311M250 311L250 312M250 312L251 313M251 313L252 314M245 310L245 311M245 311L246 313M246 313L247 314M247 314L248 315M248 315L248 316M248 316L249 317M240 305L240 308M240 308L240 310M240 310L241 312M241 312L241 314M241 314L242 315M242 315L243 316M243 316L244 317M244 317L245 318M245 318L245 319M243 316L243 317M243 317L243 318M243 318L243 319M241 312L240 314M240 314L240 316M240 316L239 317M239 317L239 318M239 318L239 319M239 319L239 320M237 296L236 300M236 300L237 304M237 304L237 309M237 309L237 311M237 311L239 314M239 314L240 316M240 316L241 318M241 318L243 319M243 319L245 319M245 319L247 319M247 319L248 318M248 318L250 319M245 319L246 320M246 320L247 321M247 321L248 323M240 316L241 318M241 318L243 319M243 319L243 321M243 321L243 322M243 322L244 323M244 323L245 324M237 309L235 311M235 311L235 313M235 313L233 315M233 315L233 317M233 317L232 319M232 319L232 320M232 320L232 322M232 322L232 323M232 323L233 324M232 320L231 322M231 322L231 323M231 323L231 324M233 315L232 317M232 317L231 319M231 319L230 320M230 320L230 321M230 321L230 323M230 323L229 324M230 320L229 320M229 320L227 320M227 320L226 320M215 165L214 160M214 160L211 155M211 155L212 150M212 150L209 146M209 146L206 144M206 144L205 140M205 140L204 137M204 137L203 134M203 134L200 133M200 133L198 132M198 132L196 130M196 130L194 129M194 129L192 128M192 128L190 128M190 128L189 126M200 133L200 131M200 131L200 129M200 129L200 127M200 127L200 126M200 126L199 125M199 125L199 123M200 127L200 126M200 126L201 124M201 124L200 123M205 140L205 137M205 137L204 135M204 135L202 132M202 132L202 130M202 130L200 129M200 129L199 127M199 127L198 126M198 126L198 124M198 124L197 123M202 132L202 130M202 130L203 128M203 128L204 127M204 127L203 125M203 125L203 124M203 124L204 123M204 127L204 126M204 126L205 125M205 125L206 124M212 150L213 146M213 146L215 143M215 143L218 141M218 141L218 138M218 138L218 136M218 136L218 133M218 133L217 132M217 132L216 130M216 130L216 128M216 128L215 127M215 127L214 126M214 126L213 126M216 128L217 127M217 127L217 126M217 126L217 125M218 133L219 131M219 131L218 129M218 129L219 127M219 127L219 126M219 126L220 125M220 125L220 123M219 127L220 126M220 126L221 126M221 126L222 124M218 141L220 138M220 138L222 136M222 136L225 135M225 135L226 134M226 134L228 132M228 132L230 131M230 131L231 130M231 130L232 129M232 129L233 128M225 135L227 135M227 135L228 134M228 134L230 133M230 133L231 132M231 132L232 132M232 132L234 131M230 133L231 134M231 134L233 134M233 134L234 134M260 165L260 160M260 160L261 154M261 154L263 150M263 150L263 146M263 146L261 143M261 143L261 140M261 140L260 138M260 138L258 137M258 137L257 135M257 135L255 135M255 135L254 135M254 135L252 134M252 134L251 135M251 135L250 135M250 135L249 134M252 134L252 134M252 134L251 133M251 133L250 132M257 135L256 134M256 134L255 133M255 133L253 132M253 132L253 131M253 131L252 130M252 130L251 129M253 132L254 130M254 130L254 129M254 129L254 128M261 140L263 138M263 138L263 136M263 136L263 134M263 134L262 132M262 132L261 131M261 131L260 130M260 130L259 129M259 129L259 127M259 127L258 126M263 134L265 133M265 133L266 132M266 132L267 130M267 130L267 129M267 129L268 128M268 128L268 127M267 130L268 130M268 130L269 130M269 130L270 130M263 150L264 146M264 146L266 143M266 143L268 140M268 140L269 138M269 138L269 135M269 135L269 132M269 132L269 131M269 131L268 129M268 129L267 128M267 128L267 127M267 127L266 126M266 126L265 125M267 128L267 127M267 127L267 126M267 126L267 124M269 132L270 131M270 131L272 129M272 129L273 127M273 127L273 126M273 126L273 124M273 124L273 123M268 140L270 140M270 140L273 139M273 139L275 138M275 138L276 137M276 137L277 135M277 135L278 134M278 134L278 132M278 132L279 131M279 131L279 129M278 134L279 133M279 133L280 132M280 132L281 130M275 138L277 137M277 137L278 137M278 137L280 137M280 137L282 137M282 137L283 136M283 136L284 135M320 175L321 169M321 169L325 164M325 164L327 159M327 159L327 155M327 155L329 151M329 151L329 147M329 147L329 145M329 145L328 142M328 142L328 139M328 139L327 138M327 138L326 137M326 137L325 135M325 135L325 134M325 134L324 133M324 133L323 132M325 135L325 134M325 134L324 132M324 132L324 131M328 139L328 137M328 137L328 135M328 135L328 133M328 133L328 132M328 132L328 131M328 131L327 129M328 133L328 132M328 132L329 131M329 131L330 130M329 147L330 145M330 145L332 143M332 143L332 140M332 140L332 138M332 138L332 136M332 136L332 134M332 134L332 133M332 133L331 132M331 132L330 131M332 134L333 133M333 133L333 131M333 131L334 130M332 140L334 140M334 140L336 139M336 139L337 138M337 138L337 137M337 137L338 136M338 136L339 135M337 138L338 138M338 138L339 137M339 137L341 136M327 159L331 156M331 156L335 153M335 153L339 152M339 152L341 149M341 149L343 148M343 148L345 145M345 145L345 143M345 143L345 141M345 141L344 140M344 140L343 139M343 139L342 137M342 137L342 136M344 140L344 138M344 138L345 137M345 137L345 136M345 145L347 144M347 144L349 143M349 143L350 141M350 141L351 140M351 140L352 139M352 139L353 138M339 152L342 151M342 151L345 150M345 150L347 150M347 150L348 147M348 147L349 145M349 145L350 143M350 143L350 142M350 142L350 140M350 140L350 138M350 143L351 142M351 142L352 141M352 141L353 140M347 150L349 149M349 149L351 149M351 149L353 149M353 149L354 150M354 150L356 150M356 150L357 151M170 185L167 181M167 181L165 176M165 176L162 171M162 171L158 170M158 170L155 169M155 169L152 166M152 166L150 165M150 165L147 165M147 165L145 166M145 166L144 167M144 167L142 168M142 168L141 169M141 169L140 170M140 170L138 170M138 170L137 171M145 166L143 166M143 166L142 164M142 164L141 163M141 163L139 162M139 162L138 161M138 161L137 161M141 163L140 162M140 162L140 161M140 161L140 159M152 166L150 164M150 164L148 161M148 161L146 160M146 160L143 160M143 160L142 158M142 158L140 156M140 156L138 156M138 156L137 156M137 156L135 155M146 160L145 158M145 158L144 156M144 156L144 154M144 154L143 153M143 153L141 152M141 152L140 151M144 154L143 153M143 153L143 151M143 151L143 150M162 171L161 168M161 168L161 165M161 165L161 162M161 162L160 160M160 160L160 158M160 158L160 155M160 155L159 154M159 154L158 153M158 153L157 152M157 152L157 151M157 151L156 151M156 151L155 150M160 155L160 154M160 154L161 152M161 152L162 151M162 151L162 149M162 149L162 148M162 148L162 147M161 162L162 159M162 159L162 157M162 157L164 154M164 154L163 153M163 153L162 151M162 151L161 149M161 149L161 148M161 148L160 147M160 147L159 146M164 154L165 154M165 154L166 152M166 152L167 151M167 151L168 150M168 150L169 149M169 149L170 148M350 182L355 179M355 179L361 177M361 177L365 173M365 173L367 168M367 168L366 164M366 164L366 159M366 159L366 155M366 155L365 152M365 152L363 149M363 149L361 148M361 148L361 145M361 145L359 144M359 144L358 142M358 142L357 141M357 141L356 140M363 149L363 147M363 147L362 144M362 144L363 142M363 142L364 140M364 140L364 138M364 138L364 136M366 159L369 157M369 157L370 154M370 154L373 153M373 153L373 151M373 151L374 148M374 148L374 146M374 146L374 145M374 145L374 143M374 143L374 142M374 146L375 145M375 145L376 143M376 143L377 143M373 153L375 152M375 152L378 151M378 151L380 150M380 150L381 149M381 149L383 148M383 148L384 147M380 150L382 150M382 150L384 150M384 150L385 149M365 173L368 169M368 169L372 167M372 167L376 166M376 166L377 163M377 163L378 160M378 160L380 157M380 157L381 155M381 155L381 153M381 153L382 151M382 151L382 150M382 150L382 148M382 148L382 147M382 151L383 150M383 150L384 149M384 149L384 148M380 157L383 156M383 156L385 156M385 156L387 155M387 155L388 153M388 153L390 153M390 153L392 152M376 166L379 166M379 166L382 166M382 166L385 166M385 166L386 164M386 164L388 162M388 162L390 160M390 160L390 159M390 159L391 157M391 157L391 156M390 160L391 161M391 161L393 161M393 161L394 162M385 166L387 167M387 167L388 168M388 168L390 169M390 169L391 170M391 170L392 170M392 170L393 171M390 169L391 170M391 170L392 171M392 171L394 171M408 212L412 211M412 211L415 211M415 211L418 212M418 212L420 210M420 210L422 208M422 208L424 207M424 207L425 206M425 206L426 205M426 205L428 204M428 204L428 203M428 203L428 201M428 201L427 200M428 204L429 203M429 203L430 203M430 203L430 202M424 207L426 206M426 206L427 205M427 205L429 204M429 204L430 203M430 203L430 202M430 202L432 201M429 204L430 203M430 203L431 203M431 203L433 203M418 212L421 211M421 211L423 210M423 210L426 210M426 210L427 209M427 209L428 208M428 208L430 207M430 207L431 206M431 206L431 206M431 206L432 205M426 210L427 211M427 211L429 212M429 212L430 212M430 212L432 212M432 212L433 212M433 212L434 211M430 212L431 213M431 213L432 214M432 214L433 215M408 212L411 212M411 212L414 212M414 212L417 211M417 211L419 210M419 210L421 209M421 209L423 207M423 207L424 206M424 206L425 205M425 205L426 204M426 204L427 203M427 203L427 202M427 202L428 201M423 207L425 207M425 207L426 206M426 206L428 206M428 206L428 205M428 205L429 204M429 204L430 204M428 206L429 206M429 206L430 206M430 206L431 207M417 211L419 213M419 213L420 215M420 215L422 216M422 216L423 217M423 217L425 217M425 217L427 217M427 217L428 217M428 217L429 217M429 217L430 217M427 217L428 217M428 217L428 218M428 218L429 219M422 216L423 217M423 217L424 218M424 218L425 220M425 220L425 220M425 220L425 221M425 221L426 222M250 225L247 221M247 221L245 216M245 216L243 211M243 211L241 208M241 208L237 206M237 206L235 203M235 203L233 203M233 203L230 203M230 203L228 203M228 203L226 203M226 203L224 203M224 203L223 204M223 204L222 204M222 204L221 205M221 205L220 205M223 204L222 204M222 204L221 204M221 204L219 204M228 203L226 202M226 202L225 201M225 201L223 200M223 200L222 200M222 200L221 200M221 200L219 200M223 200L222 200M222 200L221 199M221 199L221 198M235 203L235 201M235 201L235 198M235 198L233 196M233 196L232 195M232 195L231 194M231 194L230 192M230 192L229 192M229 192L228 191M228 191L226 190M230 192L230 191M230 191L230 190M230 190L230 189M233 196L233 194M233 194L233 192M233 192L234 190M234 190L234 189M234 189L234 187M234 187L234 186M234 190L235 189M235 189L235 188M235 188L237 187M243 211L243 208M243 208L244 204M244 204L245 201M245 201L243 199M243 199L242 197M242 197L241 195M241 195L241 193M241 193L239 192M239 192L238 191M238 191L237 191M237 191L236 190M236 190L235 189M241 195L242 193M242 193L243 191M243 191L243 189M243 189L243 188M243 188L242 187M242 187L242 186M243 189L244 189M244 189L244 188M244 188L245 187M245 201L245 198M245 198L245 196M245 196L246 194M246 194L246 193M246 193L246 191M246 191L246 189M246 189L245 188M245 188L245 187M245 187L244 186M246 189L245 188M245 188L245 186M245 186L245 185M246 194L248 194M248 194L249 192M249 192L250 192M250 192L251 191M251 191L251 190M251 190L252 189M310 200L313 195M313 195L311 190M311 190L311 185M311 185L310 182M310 182L308 178M308 178L308 175M308 175L307 172M307 172L305 170M305 170L303 168M303 168L301 167M301 167L299 167M299 167L297 166M297 166L296 165M296 165L294 164M294 164L293 164M303 168L302 167M302 167L302 164M302 164L300 163M300 163L299 163M299 163L298 162M298 162L297 161M300 163L300 161M300 161L301 160M301 160L300 158M308 175L307 172M307 172L308 170M308 170L307 167M307 167L307 165M307 165L306 164M306 164L305 162M305 162L305 161M305 161L305 160M305 160L304 159M307 167L307 165M307 165L307 164M307 164L307 162M307 162L307 161M307 161L307 160M307 160L306 159M307 162L308 161M308 161L309 160M309 160L309 158M311 185L314 182M314 182L317 181M317 181L320 179M320 179L322 177M322 177L323 175M323 175L325 173M325 173L326 171M326 171L325 169M325 169L325 168M325 168L325 166M325 166L325 165M325 165L324 164M325 168L326 167M326 167L326 166M326 166L327 165M325 173L326 171M326 171L327 170M327 170L329 168M329 168L330 168M330 168L331 167M331 167L332 166M320 179L323 178M323 178L325 177M325 177L327 177M327 177L328 175M328 175L329 174M329 174L330 173M330 173L331 172M331 172L331 171M331 171L332 170M330 173L331 172M331 172L333 172M333 172L334 172M327 177L329 177M329 177L330 177M330 177L331 176M331 176L332 176M332 176L334 176M334 176L335 176M331 176L332 177M332 177L333 177M333 177L334 178M200 240L194 239M194 239L188 237M188 237L185 232M185 232L180 231M180 231L176 229M176 229L172 228M172 228L168 229M168 229L165 228M165 228L162 227M162 227L159 228M159 228L157 229M157 229L155 230M155 230L153 230M153 230L152 231M152 231L150 232M162 227L159 227M159 227L157 226M157 226L154 226M154 226L153 227M153 227L151 228M151 228L149 228M154 226L154 224M154 224L152 224M152 224L151 223M172 228L168 227M168 227L165 226M165 226L161 226M161 226L158 227M158 227L156 227M156 227L153 226M153 226L151 225M151 225L149 225M149 225L148 224M161 226L160 224M160 224L159 222M159 222L157 219M157 219L156 218M156 218L154 217M154 217L153 216M185 232L184 228M184 228L181 225M181 225L178 222M178 222L176 220M176 220L174 218M174 218L172 216M172 216L170 215M170 215L168 214M168 214L167 213M167 213L165 213M165 213L164 213M164 213L163 213M167 213L166 213M166 213L165 211M165 211L164 211M172 216L170 214M170 214L169 212M169 212L168 210M168 210L167 209M167 209L166 208M166 208L165 207M168 210L168 209M168 209L167 207M167 207L166 206M178 222L176 220M176 220L176 217M176 217L173 215M173 215L171 214M171 214L170 213M170 213L169 211M169 211L167 210M167 210L167 209M167 209L166 208M173 215L173 213M173 213L173 211M173 211L173 209M173 209L173 208M173 208L172 206M172 206L172 205M173 209L174 208M174 208L175 207M175 207L175 206M208 250L204 247M204 247L201 243M201 243L201 238M201 238L199 236M199 236L196 234M196 234L195 231M195 231L193 230M193 230L192 229M192 229L190 228M190 228L189 228M189 228L188 227M188 227L186 227M186 227L186 226M186 226L185 226M185 226L185 225M190 228L189 228M189 228L188 227M188 227L187 226M187 226L187 225M187 225L186 224M186 224L186 223M195 231L194 229M194 229L194 227M194 227L193 225M193 225L192 223M192 223L192 221M192 221L191 220M191 220L190 218M190 218L190 218M190 218L189 216M193 225L193 223M193 223L193 222M193 222L194 220M194 220L194 219M194 219L194 218M194 218L194 217M201 238L199 235M199 235L198 232M198 232L198 228M198 228L197 226M197 226L194 225M194 225L193 223M193 223L191 223M191 223L190 223M190 223L188 222M188 222L187 221M187 221L186 221M186 221L185 221M188 222L188 221M188 221L188 220M188 220L187 219M193 223L192 221M192 221L192 220M192 220L191 219M191 219L191 217M191 217L191 216M191 216L191 215M198 228L199 226M199 226L200 224M200 224L202 222M202 222L201 220M201 220L201 218M201 218L201 216M201 216L200 215M200 215L201 214M201 214L201 213M202 222L203 221M203 221L204 220M204 220L205 219M205 219L206 217M206 217L206 216M206 216L207 216M205 219L206 218M206 218L207 218M207 218L208 218M220 267L219 262M219 262L216 258M216 258L214 253M214 253L213 250M213 250L210 248M210 248L208 245M208 245L206 244M206 244L204 242M204 242L202 241M202 241L201 240M201 240L199 240M199 240L198 240M198 240L197 239M197 239L196 239M196 239L195 238M202 241L202 239M202 239L201 238M201 238L200 236M200 236L199 236M199 236L198 235M198 235L198 234M200 236L200 235M200 235L200 234M200 234L200 233M208 245L207 243M207 243L205 241M205 241L204 238M204 238L203 237M203 237L202 235M202 235L200 234M200 234L200 233M200 233L199 233M199 233L197 232M204 238L203 236M203 236L204 234M204 234L204 232M204 232L204 231M204 231L205 229M205 229L204 228M214 253L212 250M212 250L212 246M212 246L211 242M211 242L209 241M209 241L207 239M207 239L206 237M206 237L205 235M205 235L204 233M204 233L203 232M203 232L202 231M202 231L201 230M201 230L200 230M203 232L203 230M203 230L203 229M203 229L204 228M206 237L206 235M206 235L207 233M207 233L207 232M207 232L206 230M206 230L206 229M206 229L205 228M207 232L207 230M207 230L207 229M207 229L208 228M211 242L212 240M212 240L214 237M214 237L214 234M214 234L214 232M214 232L213 231M213 231L214 229M214 229L214 227M214 227L214 226M214 226L213 225M214 229L215 228M215 228L216 226M216 226L216 225M214 234L216 233M216 233L217 232M217 232L218 230M218 230L218 229M218 229L218 227M218 227L219 226M218 230L219 229M219 229L220 229M220 229L221 228M286 178L287 173M287 173L288 168M288 168L286 164M286 164L283 162M283 162L280 161M280 161L277 160M277 160L274 160M274 160L272 159M272 159L270 159M270 159L268 160M268 160L266 161M266 161L264 161M264 161L263 161M263 161L262 162M262 162L261 163M264 161L263 160M263 160L262 159M262 159L260 158M270 159L268 159M268 159L266 158M266 158L265 158M265 158L264 158M264 158L263 159M263 159L261 159M265 158L264 157M264 157L263 156M263 156L262 155M277 160L275 159M275 159L273 157M273 157L271 156M271 156L269 156M269 156L268 155M268 155L266 155M266 155L265 155M265 155L264 155M264 155L263 155M266 155L265 155M265 155L264 154M264 154L263 153M271 156L270 154M270 154L269 152M269 152L269 151M269 151L269 149M269 149L269 148M269 148L269 147M286 164L287 161M287 161L287 157M287 157L289 155M289 155L291 152M291 152L290 150M290 150L289 147M289 147L288 146M288 146L288 144M288 144L288 142M288 142L287 141M287 141L286 140M286 140L285 139M288 142L288 140M288 140L288 139M288 139L288 137M289 147L290 146M290 146L291 144M291 144L291 143M291 143L290 142M290 142L289 141M289 141L289 139M291 143L292 142M292 142L292 140M292 140L293 140M289 155L290 153M290 153L292 151M292 151L293 150M293 150L293 149M293 149L293 147M293 147L294 145M294 145L293 145M293 145L292 144M292 144L291 143M294 145L294 144M294 144L294 143M294 143L295 142M293 150L295 149M295 149L296 149M296 149L297 147M297 147L298 146M298 146L298 145M298 145L299 144M297 147L298 147M298 147L299 147M299 147L300 147M305 151L308 148M308 148L311 145M311 145L315 143M315 143L314 140M314 140L314 137M314 137L313 134M313 134L313 132M313 132L312 130M312 130L311 128M311 128L311 127M311 127L310 126M310 126L310 124M310 124L309 123M309 123L308 123M308 123L308 122M310 124L310 123M310 123L310 122M310 122L310 121M311 128L312 127M312 127L313 125M313 125L314 124M314 124L314 123M314 123L315 122M315 122L315 121M313 134L314 132M314 132L315 130M315 130L316 129M316 129L316 127M316 127L316 126M316 126L315 125M315 125L315 124M315 124L315 123M315 123L314 122M316 129L317 128M317 128L319 127M319 127L320 126M320 126L320 125M320 125L320 124M320 124L321 123M320 126L321 126M321 126L322 125M322 125L323 125M315 143L317 140M317 140L319 139M319 139L322 137M322 137L323 136M323 136L325 134M325 134L326 132M326 132L327 131M327 131L327 129M327 129L326 128M326 128L326 127M326 127L326 126M326 126L325 126M326 128L327 127M327 127L328 127M328 127L328 126M326 132L327 131M327 131L328 130M328 130L329 129M329 129L330 129M330 129L330 128M330 128L331 127M322 137L324 137M324 137L326 137M326 137L328 136M328 136L330 136M330 136L331 135M331 135L332 134M332 134L333 134M333 134L334 133M334 133L334 132M332 134L333 134M333 134L334 133M334 133L335 133M328 136L329 137M329 137L331 137M331 137L332 137M332 137L333 137M333 137L334 136M334 136L335 136M332 137L333 138M333 138L334 138M334 138L335 139M224 147L224 141M224 141L225 136M225 136L226 130M226 130L223 127M223 127L223 123M223 123L221 119M221 119L219 117M219 117L216 116M216 116L213 115M213 115L211 114M211 114L210 114M210 114L208 113M208 113L207 114M207 114L206 114M206 114L205 115M208 113L207 112M207 112L205 112M205 112L204 110M213 115L212 114M212 114L210 112M210 112L209 111M209 111L208 110M208 110L207 110M207 110L206 109M209 111L209 110M209 110L209 108M209 108L209 107M221 119L221 116M221 116L221 113M221 113L220 110M220 110L219 109M219 109L218 107M218 107L217 106M217 106L217 104M217 104L216 103M216 103L215 102M220 110L220 108M220 108L220 106M220 106L220 104M220 104L221 103M221 103L221 101M221 101L221 100M226 130L228 127M228 127L230 123M230 123L233 120M233 120L233 117M233 117L232 114M232 114L233 111M233 111L233 109M233 109L232 107M232 107L231 104M231 104L230 103M230 103L229 101M229 101L228 100M231 104L232 103M232 103L232 101M232 101L233 99M233 111L235 110M235 110L235 108M235 108L237 106M237 106L238 105M238 105L239 103M239 103L239 102M237 106L238 105M238 105L240 104M240 104L241 103M233 120L236 120M236 120L238 118M238 118L241 118M241 118L243 116M243 116L244 114M244 114L246 112M246 112L246 110M246 110L246 109M246 109L246 107M241 118L244 119M244 119L246 119M246 119L249 119M249 119L250 118M250 118L251 117M251 117L252 116M249 119L250 120M250 120L252 120M252 120L253 120M371 239L373 234M373 234L376 232M376 232L380 229M380 229L381 226M381 226L381 222M381 222L382 219M382 219L382 217M382 217L382 215M382 215L382 212M382 212L380 212M380 212L379 211M379 211L378 209M378 209L377 209M377 209L376 208M376 208L375 207M382 212L383 211M383 211L382 209M382 209L382 208M382 208L382 207M382 207L382 206M382 206L382 204M382 219L384 217M384 217L386 216M386 216L388 214M388 214L388 212M388 212L388 210M388 210L388 208M388 208L389 207M389 207L389 206M389 206L388 205M388 208L388 207M388 207L389 206M389 206L390 205M388 214L389 213M389 213L391 213M391 213L392 212M392 212L393 211M393 211L394 210M394 210L394 209M392 212L394 212M394 212L395 213M395 213L396 213M380 229L382 226M382 226L385 224M385 224L388 222M388 222L388 220M388 220L387 218M387 218L388 216M388 216L388 214M388 214L387 213M387 213L387 211M387 211L387 210M387 210L387 209M387 209L386 209M387 211L387 210M387 210L388 209M388 209L388 208M388 216L389 214M389 214L390 212M390 212L391 211M391 211L392 210M392 210L392 209M392 209L392 208M388 222L390 222M390 222L392 222M392 222L395 222M395 222L396 222M396 222L398 221M398 221L399 221M399 221L400 220M400 220L401 220M401 220L402 219M395 222L396 223M396 223L398 223M398 223L399 224M399 224L400 223M400 223L401 223M401 223L402 223M399 224L400 224M400 224L401 224M401 224L402 225M284 159L287 155M287 155L290 151M290 151L293 148M293 148L296 145M296 145L296 141M296 141L299 139M299 139L298 137M298 137L298 134M298 134L297 132M297 132L296 131M296 131L296 129M296 129L296 127M296 127L295 126M295 126L295 125M295 125L295 124M297 132L298 130M298 130L298 129M298 129L300 128M300 128L301 127M301 127L302 127M302 127L303 126M299 139L301 138M301 138L302 136M302 136L303 133M303 133L302 132M302 132L303 130M303 130L304 128M304 128L303 127M303 127L303 126M303 126L302 125M304 128L304 127M304 127L305 126M305 126L305 124M303 133L304 133M304 133L306 132M306 132L307 130M307 130L308 130M308 130L309 129M309 129L309 128M293 148L297 147M297 147L300 146M300 146L304 146M304 146L307 145M307 145L308 142M308 142L309 140M309 140L309 138M309 138L309 136M309 136L310 135M310 135L310 133M310 133L309 132M309 132L309 131M310 135L310 134M310 134L311 133M311 133L312 132M309 140L310 140M310 140L312 140M312 140L313 139M313 139L314 138M314 138L315 137M315 137L316 137M313 139L315 138M315 138L316 138M316 138L317 138M304 146L306 147M306 147L309 146M309 146L312 147M312 147L313 146M313 146L315 146M315 146L317 145M317 145L318 144M318 144L319 143M319 143L320 142M317 145L319 145M319 145L320 145M320 145L321 145M312 147L313 148M313 148L315 149M315 149L317 151M317 151L318 151M318 151L319 151M319 151L320 152M317 151L317 152M317 152L318 153M318 153L320 154M206 271L200 268M200 268L195 266M195 266L189 266M189 266L185 265M185 265L182 267M182 267L178 269M178 269L176 269M176 269L174 272M174 272L173 273M173 273L172 275M172 275L171 276M171 276L171 278M171 278L171 279M171 279L171 280M171 280L170 281M171 278L170 278M170 278L169 279M169 279L169 280M173 273L171 274M171 274L170 276M170 276L169 277M169 277L169 278M169 278L168 279M168 279L168 280M169 277L168 277M168 277L167 276M167 276L166 276M178 269L175 268M175 268L173 266M173 266L170 266M170 266L168 266M168 266L166 265M166 265L164 265M164 265L162 265M162 265L161 265M161 265L160 264M170 266L169 264M169 264L168 262M168 262L167 260M167 260L166 259M166 259L165 258M165 258L164 257M189 266L186 263M186 263L181 262M181 262L178 259M178 259L176 257M176 257L173 256M173 256L171 254M171 254L169 254M169 254L167 254M167 254L165 254M165 254L163 255M163 255L162 256M162 256L160 256M165 254L163 253M163 253L162 252M162 252L160 251M171 254L169 253M169 253L168 251M168 251L167 249M167 249L165 249M165 249L163 248M163 248L162 248M167 249L166 248M166 248L166 246M166 246L166 245M178 259L176 257M176 257L174 255M174 255L172 253M172 253L170 252M170 252L168 251M168 251L166 251M166 251L165 250M165 250L164 248M164 248L162 247M172 253L171 251M171 251L171 249M171 249L171 247M171 247L172 245M172 245L172 244M172 244L172 242M171 247L172 245M172 245L173 244M173 244L173 242M274 228L276 224M276 224L274 219M274 219L275 214M275 214L276 211M276 211L275 208M275 208L275 204M275 204L274 202M274 202L273 200M273 200L271 198M271 198L270 198M270 198L268 198M268 198L266 197M266 197L265 197M265 197L263 197M263 197L262 197M266 197L265 196M265 196L264 195M264 195L263 194M271 198L271 197M271 197L270 195M270 195L269 194M269 194L269 193M269 193L268 192M268 192L267 191M275 204L275 202M275 202L276 201M276 201L276 199M276 199L275 197M275 197L275 196M275 196L275 195M275 195L274 194M274 194L274 193M274 193L274 192M276 199L277 198M277 198L277 197M277 197L278 196M278 196L278 195M278 195L278 194M278 194L279 193M278 196L279 195M279 195L280 195M280 195L280 195M275 214L277 210M277 210L277 206M277 206L278 203M278 203L278 200M278 200L278 198M278 198L277 195M277 195L277 193M277 193L277 191M277 191L276 190M276 190L276 189M276 189L275 188M275 188L275 186M276 190L277 188M277 188L277 187M277 187L277 186M277 195L277 193M277 193L278 191M278 191L279 190M279 190L279 188M279 188L279 187M279 187L278 186M279 190L279 188M279 188L280 187M280 187L281 186M278 203L280 201M280 201L282 200M282 200L285 199M285 199L286 197M286 197L286 195M286 195L288 194M288 194L288 192M288 192L288 191M288 191L288 190M288 194L289 194M289 194L291 194M291 194L292 194M285 199L286 197M286 197L288 196M288 196L289 194M289 194L290 194M290 194L291 193M291 193L292 192M289 194L290 194M290 194L291 195M291 195L293 194M213 146L215 142M215 142L216 138M216 138L217 133M217 133L217 130M217 130L216 126M216 126L216 123M216 123L214 121M214 121L212 120M212 120L210 119M210 119L209 119M209 119L208 117M208 117L206 116M206 116L205 117M205 117L204 117M204 117L204 118M206 116L206 115M206 115L205 114M205 114L205 113M210 119L210 118M210 118L210 116M210 116L209 115M209 115L208 114M208 114L208 113M208 113L208 112M216 123L216 121M216 121L217 119M217 119L219 117M219 117L218 116M218 116L218 114M218 114L217 112M217 112L217 111M217 111L216 110M216 110L215 109M217 112L218 111M218 111L218 110M218 110L218 109M219 117L220 116M220 116L221 115M221 115L221 114M221 114L222 113M222 113L223 112M223 112L224 112M217 133L220 132M220 132L221 129M221 129L222 126M222 126L223 124M223 124L224 122M224 122L224 120M224 120L223 119M223 119L224 118M224 118L225 116M225 116L224 115M224 115L224 114M224 114L224 113M225 116L225 115M225 115L225 114M225 114L226 113M224 120L225 120M225 120L226 118M226 118L227 118M227 118L227 117M227 117L227 116M227 116L228 115M227 118L228 117M228 117L229 116M229 116L230 116M222 126L224 125M224 125L226 124M226 124L228 123M228 123L229 122M229 122L230 121M230 121L231 120M231 120L232 119M232 119L232 118M232 118L233 117M231 120L232 119M232 119L233 119M233 119L234 119M228 123L230 123M230 123L232 123M232 123L233 123M233 123L235 123M235 123L236 123M236 123L237 122M233 123L235 123M235 123L236 123M236 123L238 123M349 173L354 170M354 170L359 167M359 167L363 163M363 163L366 160M366 160L370 158M370 158L372 154M372 154L372 151M372 151L373 148M373 148L375 145M375 145L375 142M375 142L375 140M375 140L374 137M374 137L372 136M372 136L371 135M371 135L369 133M374 137L374 136M374 136L374 134M374 134L374 132M375 145L376 143M376 143L376 141M376 141L377 139M377 139L378 137M378 137L378 136M378 136L378 134M372 154L375 155M375 155L378 155M378 155L381 154M381 154L382 152M382 152L384 151M384 151L386 150M386 150L387 150M387 150L389 150M389 150L390 148M381 154L383 155M383 155L385 156M385 156L387 156M387 156L388 156M388 156L390 157M390 157L391 157M363 163L367 162M367 162L372 161M372 161L376 160M376 160L377 157M377 157L380 156M380 156L383 154M383 154L384 152M384 152L385 150M385 150L386 147M386 147L387 146M387 146L387 144M387 144L388 142M386 147L388 147M388 147L390 146M390 146L391 146M383 154L385 154M385 154L388 153M388 153L391 153M391 153L392 152M392 152L392 150M392 150L393 148M391 153L392 153M392 153L394 153M394 153L396 153M376 160L378 160M378 160L381 160M381 160L384 160M384 160L386 160M386 160L387 160M387 160L389 159M389 159L390 159M390 159L391 158M391 158L392 157M389 159L390 159M390 159L392 159M392 159L393 159M384 160L386 160M386 160L387 161M387 161L389 161M389 161L390 162M390 162L391 163M391 163L392 163M344 262L348 259M348 259L354 258M354 258L359 258M359 258L361 255M361 255L364 253M364 253L365 250M365 250L365 248M365 248L365 245M365 245L365 242M365 242L365 241M365 241L365 239M365 239L364 238M364 238L363 237M363 237L362 236M362 236L362 235M364 238L364 236M364 236L363 235M363 235L363 234M365 242L367 241M367 241L368 239M368 239L370 238M370 238L370 237M370 237L371 235M371 235L372 235M365 250L367 248M367 248L369 247M369 247L371 246M371 246L372 244M372 244L373 242M373 242L373 240M373 240L373 239M373 239L374 238M374 238L375 237M371 246L373 245M373 245L375 245M375 245L377 244M377 244L378 243M378 243L379 243M379 243L380 242M377 244L378 244M378 244L380 245M380 245L381 245M359 258L363 259M363 259L367 259M367 259L370 261M370 261L373 261M373 261L375 262M375 262L378 261M378 261L379 260M379 260L381 259M381 259L382 257M382 257L382 256M382 256L381 254M381 254L382 253M382 257L383 257M383 257L384 256M384 256L385 256M378 261L380 261M380 261L381 262M381 262L383 262M383 262L385 262M385 262L386 263M386 263L387 263M370 261L371 264M371 264L373 267M373 267L374 269M374 269L375 271M375 271L377 272M377 272L379 272M379 272L380 272M380 272L381 272M381 272L382 272M379 272L379 273M379 273L380 274M380 274L381 275M374 269L374 272M374 272L375 274M375 274L376 276M376 276L377 277M377 277L378 279M378 279L379 280M198 216L199 212M199 212L199 208M199 208L200 203M200 203L198 200M198 200L197 197M197 197L196 194M196 194L195 192M195 192L194 191M194 191L192 189M192 189L191 188M191 188L189 188M189 188L188 187M188 187L187 188M187 188L185 187M185 187L184 187M192 189L192 188M192 188L191 186M191 186L190 185M190 185L190 184M190 184L189 183M189 183L188 182M190 185L190 184M190 184L191 182M191 182L191 181M196 194L197 192M197 192L196 190M196 190L194 188M194 188L193 188M193 188L192 186M192 186L191 185M191 185L190 185M190 185L189 184M189 184L188 184M191 185L191 184M191 184L190 183M190 183L190 182M194 188L195 187M195 187L195 185M195 185L196 184M196 184L196 183M196 183L195 181M195 181L195 180M196 184L197 183M197 183L197 182M197 182L197 181M200 203L199 200M199 200L199 197M199 197L199 194M199 194L199 192M199 192L199 189M199 189L199 187M199 187L199 185M199 185L198 183M198 183L198 182M198 182L197 181M197 181L196 180M196 180L195 179M198 182L197 180M197 180L198 179M198 179L198 178M199 187L200 185M200 185L200 184M200 184L201 182M201 182L201 181M201 181L201 180M201 180L201 179M201 182L202 181M202 181L203 180M203 180L204 179M199 194L200 192M200 192L201 190M201 190L203 189M203 189L204 188M204 188L204 186M204 186L205 185M205 185L206 184M206 184L206 183M206 183L206 182M205 185L206 184M206 184L207 184M207 184L208 183M203 189L205 188M205 188L206 188M206 188L208 188M208 188L208 187M208 187L209 186M209 186L210 185M208 188L209 188M209 188L210 188M210 188L211 189M382 282L386 279M386 279L390 276M390 276L393 273M393 273L395 271M395 271L398 270M398 270L400 268M400 268L402 266M402 266L402 264M402 264L403 262M403 262L403 261M403 261L404 259M404 259L403 258M403 258L403 257M403 257L403 256M403 256L403 255M403 262L403 261M403 261L404 260M404 260L405 259M405 259L405 258M405 258L405 257M405 257L404 256M405 259L406 258M406 258L406 257M406 257L407 257M400 268L402 266M402 266L404 265M404 265L406 265M406 265L408 264M408 264L409 263M409 263L410 262M410 262L410 261M410 261L411 259M411 259L412 258M410 262L411 262M411 262L412 262M412 262L413 261M406 265L408 265M408 265L410 265M410 265L411 266M411 266L412 265M412 265L413 265M413 265L414 264M411 266L413 266M413 266L413 267M413 267L415 268M393 273L396 272M396 272L400 271M400 271L403 272M403 272L405 270M405 270L408 270M408 270L410 270M410 270L412 269M412 269L414 268M414 268L416 267M416 267L416 265M416 265L417 264M417 264L418 263M416 267L417 267M417 267L418 267M418 267L419 267M410 270L413 270M413 270L415 271M415 271L417 270M417 270L418 271M418 271L419 271M419 271L421 271M403 272L405 273M405 273L407 274M407 274L409 276M409 276L411 276M411 276L412 276M412 276L414 277M414 277L415 277M415 277L416 277M416 277L418 277M409 276L410 277M410 277L411 278M411 278L412 279M412 279L413 280M413 280L414 280M414 280L414 281M274 202L278 199M278 199L280 195M280 195L282 190M282 190L283 187M283 187L285 185M285 185L287 182M287 182L288 180M288 180L288 178M288 178L288 176M288 176L287 175M287 175L286 174M286 174L285 173M285 173L284 172M284 172L284 170M284 170L283 169M285 173L285 172M285 172L286 171M286 171L286 170M288 176L288 175M288 175L288 173M288 173L288 172M288 172L288 171M288 171L288 170M288 170L288 169M288 172L289 171M289 171L290 171M290 171L290 170M287 182L289 181M289 181L290 179M290 179L291 177M291 177L292 176M292 176L294 175M294 175L294 173M294 173L295 172M295 172L295 170M295 170L295 169M294 173L295 172M295 172L296 172M296 172L297 171M291 177L292 176M292 176L294 175M294 175L296 175M296 175L297 174M297 174L298 174M298 174L299 173M296 175L297 174M297 174L298 174M298 174L299 174M282 190L285 190M285 190L287 188M287 188L289 186M289 186L290 184M290 184L290 182M290 182L291 180M291 180L291 179M291 179L290 177M290 177L290 176M290 176L290 175M290 175L290 174M290 174L291 173M291 180L292 179M292 179L293 179M293 179L294 178M294 178L295 178M295 178L296 177M296 177L296 176M294 178L295 178M295 178L296 179M296 179L297 179M289 186L291 186M291 186L293 185M293 185L295 184M295 184L296 183M296 183L297 183M297 183L298 182M298 182L299 181M299 181L300 181M300 181L301 180M295 184L297 184M297 184L298 184M298 184L300 183M300 183L301 184M301 184L301 184M301 184L302 185M176 155L175 149M175 149L176 143M176 143L174 138M174 138L172 135M172 135L168 132M168 132L168 129M168 129L165 128M165 128L163 126M163 126L161 124M161 124L160 124M160 124L158 124M158 124L156 123M156 123L155 123M155 123L154 123M154 123L154 123M156 123L156 123M156 123L155 122M155 122L154 122M161 124L160 123M160 123L159 121M159 121L158 119M158 119L158 118M158 118L158 117M158 117L157 116M168 129L167 126M167 126L167 124M167 124L168 121M168 121L168 120M168 120L167 118M167 118L166 116M166 116L166 115M166 115L165 114M165 114L164 113M166 116L167 115M167 115L167 113M167 113L168 112M168 121L169 120M169 120L170 119M170 119L172 118M172 118L172 116M172 116L173 115M173 115L173 114M172 118L172 117M172 117L174 116M174 116L175 116M174 138L173 133M173 133L173 128M173 128L172 124M172 124L171 121M171 121L168 119M168 119L167 116M167 116L164 116M164 116L162 115M162 115L160 114M160 114L158 113M158 113L156 113M156 113L154 113M160 114L158 113M158 113L158 111M158 111L156 111M167 116L167 113M167 113L166 111M166 111L166 109M166 109L165 107M165 107L164 106M164 106L163 104M166 109L166 107M166 107L167 105M167 105L167 103M172 124L172 120M172 120L174 118M174 118L176 115M176 115L175 113M175 113L175 110M175 110L175 108M175 108L174 106M174 106L173 104M173 104L172 103M175 108L176 106M176 106L177 105M177 105L177 103M176 115L177 113M177 113L178 111M178 111L180 110M180 110L180 108M180 108L180 107M180 107L180 105M180 110L181 109M181 109L182 108M182 108L183 107M150 232L125 228M125 228L100 232" stroke="#4e4440" stroke-width="1.0" fill="none" opacity="0.9"/>
<path d="M235 250L236 243M236 243L236 235M236 235L240 229M262 240L260 233M260 233L260 226M260 226L261 218M300 225L304 219M304 219L304 213M304 213L306 206M185 225L180 220M180 220L178 213M178 213L172 208" stroke="#4e4440" stroke-width="1.25" fill="none" opacity="0.9"/>
<path d="M200 275L196 269M196 269L195 262M195 262L190 256M212 262L213 254M213 254L213 246M213 246L210 238" stroke="#4e4440" stroke-width="1.5" fill="none" opacity="0.9"/>
</g>
<path d="M71 538L68 537M68 530L65 529M58 519L58 518M56 513L53 513M52 507L53 504M47 504L44 505M38 500L36 500M35 498L33 500M31 498L29 500M36 493L34 492M34 489L36 487M53 496L50 495M52 487L50 487M53 483L49 481M50 479L52 477M55 487L52 485M57 478L54 477M69 518L67 517M69 512L68 510M71 507L74 508M69 500L68 499M69 497L71 495M67 491L68 488M66 489L64 488M70 494L68 493M70 491L69 490M71 489L69 486M77 501L80 502M79 498L78 494M80 495L82 494M80 491L78 488M81 488L79 485M84 496L86 499M87 497L89 499M80 536L77 534M75 527L78 525M70 518L68 518M59 508L57 508M55 502L56 500M49 500L47 502M37 497L37 494M33 496L32 498M29 495L28 497M26 493L25 495M34 494L32 495M30 491L29 492M27 488L28 485M57 497L59 496M58 492L56 490M60 484L57 483M59 480L62 478M56 477L54 477M62 485L60 482M64 482L66 481M78 507L80 506M80 500L78 497M78 495L76 494M76 483L79 481M76 480L79 478M76 476L77 474M80 483L79 481M80 479L79 478M81 476L84 474M82 495L83 496M85 492L85 489M89 489L89 487M91 486L90 484M94 481L92 479M93 487L94 488M100 489L101 490M96 531L93 529M100 512L104 510M100 505L102 503M96 500L97 497M93 494L89 494M91 489L88 489M87 487L84 487M85 482L85 479M82 479L81 476M79 478L76 480M85 478L87 477M83 471L81 470M92 485L94 484M90 481L87 479M88 479L89 477M92 478L94 476M93 474L90 471M106 508L110 507M110 502L108 500M115 497L113 494M115 493L112 491M116 484L119 482M114 482L115 478M112 479L111 479M111 476L108 476M118 482L122 481M120 479L124 480M121 476L123 477M127 491L129 492M130 491L133 492M133 489L134 491M64 457L66 455M64 449L65 447M55 443L54 444M50 442L48 443M38 445L36 447M32 442L31 441M29 440L27 438M47 439L44 438M42 433L44 430M37 433L36 434M34 433L33 429M38 426L35 426M66 443L67 441M66 437L68 435M66 431L68 429M63 428L61 429M55 420L52 424M52 419L52 417M55 419L59 418M54 416L52 414M55 413L52 411M68 424L71 423M70 420L67 417M69 418L71 416M70 418L73 417M72 413L70 411M120 463L124 463M121 455L123 455M122 447L126 447M124 443L121 440M126 438L123 435M125 433L122 431M122 431L118 431M122 428L123 425M121 424L121 423M119 421L116 422M117 419L115 420M126 430L125 427M131 420L129 417M131 417L129 415M132 424L134 425M135 424L137 426M129 440L128 438M133 437L133 435M133 434L131 432M135 431L133 430M134 428L137 426M135 423L133 421M136 438L138 440M139 436L139 434M143 435L146 437M144 433L144 431M146 431L146 427M148 429L151 430M114 520L118 514M118 514L117 511M118 514L120 507M120 507L124 501M126 496L128 495M127 491L131 491M127 486L130 485M126 483L122 483M124 481L123 480M122 476L122 473M121 474L119 473M120 472L117 472M125 476L128 474M124 474L123 471M124 472L127 470M130 485L130 482M134 483L136 483M135 480L135 477M136 477L139 477M137 475L135 472M138 473L140 472M140 479L141 476M142 480L144 482M126 496L126 494M128 492L128 488M131 488L135 489M133 486L132 484M135 484L134 481M137 481L134 479M137 479L133 477M137 477L135 475M138 475L135 474M142 477L144 478M137 487L139 489M139 485L142 487M143 480L141 476M141 484L143 482M143 484L145 486M145 484L146 487M66 440L63 433M63 433L60 425M60 425L58 425M60 425L59 417M56 412L57 408M52 407L51 408M49 401L50 397M45 400L44 398M41 397L38 399M36 398L36 396M33 400L30 399M29 401L30 404M33 397L32 397M30 395L30 391M28 393L25 393M48 397L49 395M41 392L37 391M35 384L33 385M62 405L66 404M64 399L66 399M62 395L58 395M61 390L58 389M56 383L54 383M55 380L56 378M51 378L48 379M60 382L59 381M61 379L60 376M61 375L63 375M68 397L67 393M71 394L70 392M76 385L76 383M77 389L77 386M81 386L80 384M100 385L101 378M101 378L104 375M101 378L100 371M100 371L101 369M100 371L96 364M92 362L90 362M89 358L87 358M83 353L83 350M77 352L76 350M73 350L72 349M71 350L70 353M72 348L73 345M85 351L87 349M85 347L83 347M83 342L86 339M84 339L82 338M102 351L100 349M102 347L100 346M101 344L103 343M99 341L96 339M98 339L96 338M98 337L94 336M97 335L94 333M110 345L113 345M114 338L117 338M114 343L116 344M116 341L116 337M86 420L85 411M85 411L81 404M81 404L77 396M77 396L74 395M73 391L72 391M68 386L66 387M63 383L61 384M54 380L52 377M49 379L46 382M46 379L45 383M43 380L42 382M40 380L38 379M47 376L48 373M46 374L47 372M43 372L41 372M56 371L53 371M53 369L53 366M51 366L52 363M49 364L47 364M55 368L53 367M56 364L57 362M56 361L58 359M79 391L78 390M82 387L81 384M85 382L89 383M85 370L86 369M82 365L79 363M89 382L90 378M93 381L93 378M97 381L100 383M98 379L100 379M100 377L104 378M99 380L100 377M101 379L103 381M120 420L124 414M124 414L126 413M124 414L124 406M124 406L128 401M128 401L126 399M125 396L124 396M125 391L123 391M123 386L125 385M120 385L118 385M114 378L114 374M115 375L116 373M114 372L112 372M124 383L123 380M125 379L123 377M125 373L127 373M125 368L124 366M136 388L138 389M134 381L132 380M133 377L130 375M133 375L134 373M132 371L133 369M133 375L131 374M135 371L133 368M144 380L146 381M145 374L142 372M146 372L143 370M146 380L149 382M149 380L150 381M72 380L70 374M70 374L66 372M70 374L71 367M71 367L72 361M72 361L70 360M72 356L75 354M70 352L67 352M66 346L66 343M63 344L60 346M60 343L60 341M59 341L56 342M57 339L55 339M55 338L55 336M67 345L69 345M67 342L70 340M66 339L63 338M65 337L66 336M64 336L65 333M63 333L66 331M67 337L70 336M69 335L67 333M69 333L69 331M79 354L82 353M83 352L85 351M85 349L87 349M87 346L88 346M87 343L91 343M87 339L90 337M86 338L84 337M89 342L88 340M90 339L90 336M85 349L84 345M90 344L92 345M92 343L94 344M97 340L99 341M60 500L56 495M56 495L58 492M56 495L51 490M51 490L53 486M51 490L47 485M47 485L44 485M44 482L43 479M40 480L39 477M37 478L36 476M34 478L32 481M31 478L30 479M26 477L24 479M24 478L21 476M22 479L20 481M26 476L23 479M24 476L24 473M23 475L20 477M32 473L29 473M31 470L29 471M29 469L29 466M28 467L26 469M25 467L25 464M31 468L31 466M29 466L27 467M29 464L30 461M47 477L49 474M45 473L47 471M43 471L39 471M39 466L40 463M38 464L39 462M37 462L34 462M36 460L34 460M45 470L43 467M45 468L46 467M44 463L46 461M42 460L43 458M46 464L46 462M48 461L48 459M88 350L87 343M87 343L85 342M87 343L84 337M84 337L85 336M84 337L85 331M82 327L83 326M80 323L78 323M78 319L75 319M73 310L71 310M66 308L66 306M72 308L68 306M72 305L74 304M77 313L75 311M77 309L80 307M77 307L75 304M78 304L81 303M78 302L81 300M88 327L91 325M89 322L91 321M91 317L90 316M90 314L93 312M90 311L93 309M91 307L94 305M91 305L93 303M89 302L91 301M91 305L94 304M92 303L96 303M92 301L91 298M92 314L94 315M98 311L100 311M100 306L102 306M102 304L104 304M100 309L102 310M102 308L101 305M103 306L105 307M125 360L128 355M128 355L127 353M128 355L130 349M130 349L133 344M133 344L136 343M132 341L135 339M134 333L132 331M134 330L135 328M132 328L133 327M129 324L126 324M131 322L134 319M134 326L133 325M133 324L130 323M132 323L134 321M132 321L133 319M136 324L138 324M138 321L140 321M135 341L135 337M138 338L138 336M141 335L144 335M142 332L144 332M142 330L146 328M142 327L143 326M142 325L139 322M143 322L140 320M143 325L147 326M144 324L146 324M145 322L147 323M143 334L146 335M149 332L151 329M151 331L150 329M152 327L152 324M151 333L154 335M154 333L155 331M156 333L158 336M55 420L51 416M51 416L49 416M51 416L47 411M47 411L47 405M47 405L49 403M43 403L44 399M39 402L39 399M35 400L36 398M32 400L32 401M25 398L24 399M23 399L22 396M34 398L34 395M31 397L31 395M28 395L25 395M27 394L25 396M25 393L25 389M26 392L24 392M26 390L28 388M47 397L44 396M44 390L42 390M42 389L43 386M41 386L42 382M40 384L37 383M40 381L38 381M47 390L49 389M49 387L48 384M53 381L56 381M56 382L56 380M57 381L57 379" stroke="#5a4c46" stroke-width="0.75" fill="none" opacity="0.75"/>
<path d="M76 545L71 538M71 538L68 530M68 530L65 522M65 522L58 519M58 519L56 513M56 513L52 507M52 507L47 504M47 504L43 501M43 501L38 500M38 500L35 498M35 498L31 498M31 498L28 498M38 500L35 497M35 497L36 493M36 493L34 489M52 507L53 502M53 502L53 496M53 496L54 491M54 491L52 487M52 487L53 483M53 483L50 479M54 491L55 487M55 487L56 482M56 482L57 478M65 522L69 518M69 518L69 512M69 512L71 507M71 507L70 504M70 504L69 500M69 500L69 497M69 497L67 494M67 494L67 491M67 491L66 489M69 497L70 494M70 494L70 491M70 491L71 489M71 507L74 504M74 504L77 501M77 501L79 498M79 498L80 495M80 495L80 491M80 491L81 488M79 498L81 496M81 496L84 496M84 496L87 497M84 545L80 536M80 536L75 527M75 527L70 518M70 518L65 512M65 512L59 508M59 508L55 502M55 502L49 500M49 500L43 500M43 500L37 497M37 497L33 496M33 496L29 495M29 495L26 493M37 497L34 494M34 494L30 491M30 491L27 488M55 502L57 497M57 497L58 492M58 492L60 487M60 487L60 484M60 484L59 480M59 480L56 477M60 487L62 485M62 485L64 482M64 482L64 479M70 518L74 513M74 513L78 507M78 507L80 500M80 500L78 495M78 495L79 491M79 491L78 486M78 486L76 483M76 483L76 480M76 480L76 476M78 486L80 483M80 483L80 479M80 479L81 476M80 500L82 495M82 495L85 492M85 492L89 489M89 489L91 486M91 486L93 484M93 484L94 481M89 489L93 487M93 487L96 488M96 488L100 489M92 540L96 531M96 531L96 521M96 521L100 512M100 512L100 505M100 505L96 500M96 500L93 494M93 494L91 489M91 489L87 487M87 487L85 482M85 482L82 479M82 479L79 478M79 478L76 476M85 482L85 478M85 478L84 475M84 475L83 471M93 494L91 490M91 490L92 485M92 485L90 481M90 481L88 479M88 479L87 476M87 476L87 473M90 481L92 478M92 478L93 474M93 474L92 471M100 512L106 508M106 508L110 502M110 502L115 497M115 497L115 493M115 493L116 488M116 488L116 484M116 484L114 482M114 482L112 479M112 479L111 476M116 484L118 482M118 482L120 479M120 479L121 476M115 497L120 497M120 497L123 494M123 494L127 491M127 491L130 491M130 491L133 489M133 489L135 487M74 470L69 464M69 464L64 457M64 457L64 449M64 449L59 447M59 447L55 443M55 443L50 442M50 442L46 443M46 443L42 443M42 443L38 445M38 445L34 444M34 444L32 442M32 442L29 440M50 442L47 439M47 439L44 436M44 436L42 433M42 433L40 432M40 432L37 433M37 433L34 433M42 433L40 431M40 431L38 429M38 429L38 426M64 449L66 443M66 443L66 437M66 437L66 431M66 431L63 428M63 428L60 425M60 425L57 422M57 422L55 420M55 420L52 419M52 419L49 419M57 422L55 419M55 419L54 416M54 416L55 413M66 431L68 428M68 428L68 424M68 424L70 420M70 420L69 418M69 418L68 416M68 416L68 413M70 420L70 418M70 418L71 415M71 415L72 413M116 470L120 463M120 463L121 455M121 455L122 447M122 447L124 443M124 443L126 438M126 438L125 433M125 433L122 431M122 431L122 428M122 428L121 424M121 424L121 422M121 422L119 421M119 421L117 419M125 433L126 430M126 430L128 427M128 427L130 425M130 425L131 423M131 423L131 420M131 420L131 417M130 425L132 424M132 424L135 424M135 424L137 422M122 447L127 445M127 445L129 440M129 440L133 437M133 437L133 434M133 434L135 431M135 431L134 428M134 428L134 425M134 425L135 423M135 423L135 420M133 437L136 438M136 438L139 436M139 436L143 435M143 435L144 433M144 433L146 431M146 431L148 429M143 435L145 435M145 435L148 434M148 434L151 433M124 501L126 496M126 496L127 491M127 491L127 486M127 486L126 483M126 483L124 481M124 481L124 478M124 478L122 476M122 476L121 474M121 474L120 472M124 478L125 476M125 476L124 474M124 474L124 472M127 486L130 485M130 485L134 483M134 483L135 480M135 480L136 477M136 477L137 475M137 475L138 473M135 480L138 479M138 479L140 479M140 479L142 480M124 501L126 496M126 496L128 492M128 492L131 488M131 488L133 486M133 486L135 484M135 484L137 481M137 481L137 479M137 479L137 477M137 477L138 475M137 481L139 480M139 480L140 478M140 478L142 477M131 488L134 488M134 488L137 487M137 487L139 485M139 485L141 483M141 483L141 481M141 481L143 480M139 485L141 484M141 484L143 484M143 484L145 484M59 417L56 412M56 412L52 407M52 407L49 401M49 401L45 400M45 400L41 397M41 397L36 398M36 398L33 400M33 400L29 401M29 401L27 404M36 398L33 397M33 397L30 395M30 395L28 393M49 401L48 397M48 397L44 395M44 395L41 392M41 392L38 390M38 390L37 387M37 387L35 384M59 417L60 411M60 411L62 405M62 405L64 399M64 399L62 395M62 395L61 390M61 390L59 386M59 386L56 383M56 383L55 380M55 380L51 378M59 386L60 382M60 382L61 379M61 379L61 375M64 399L68 397M68 397L71 394M71 394L75 391M75 391L75 388M75 388L76 385M76 385L78 382M75 391L77 389M77 389L78 387M78 387L81 386M96 364L92 362M92 362L89 358M89 358L86 354M86 354L83 353M83 353L80 353M80 353L77 352M77 352L75 351M75 351L73 350M73 350L71 350M77 352L75 351M75 351L74 349M74 349L72 348M86 354L85 351M85 351L85 347M85 347L84 344M84 344L83 342M83 342L84 339M84 339L83 337M96 364L97 359M97 359L99 355M99 355L102 351M102 351L102 347M102 347L101 344M101 344L99 341M99 341L98 339M98 339L98 337M98 337L97 335M102 351L104 348M104 348L107 347M107 347L110 345M110 345L111 342M111 342L113 341M113 341L114 338M110 345L112 343M112 343L114 343M114 343L116 341M77 396L73 391M73 391L68 386M68 386L63 383M63 383L58 381M58 381L54 380M54 380L49 379M49 379L46 379M46 379L43 380M43 380L40 380M49 379L47 376M47 376L46 374M46 374L43 372M63 383L60 379M60 379L59 374M59 374L56 371M56 371L53 369M53 369L51 366M51 366L49 364M56 371L55 368M55 368L56 364M56 364L56 361M77 396L79 391M79 391L82 387M82 387L85 382M85 382L83 378M83 378L83 374M83 374L85 370M85 370L83 368M83 368L82 365M82 365L82 363M85 382L89 382M89 382L93 381M93 381L97 381M97 381L98 379M98 379L100 377M100 377L101 375M97 381L99 380M99 380L101 379M101 379L103 378M128 401L125 396M125 396L125 391M125 391L123 386M123 386L120 385M120 385L117 383M117 383L116 380M116 380L114 378M114 378L112 377M112 377L111 375M116 380L115 377M115 377L115 375M115 375L114 372M123 386L124 383M124 383L125 379M125 379L125 376M125 376L125 373M125 373L125 371M125 371L125 368M128 401L132 397M132 397L133 392M133 392L136 388M136 388L135 384M135 384L134 381M134 381L133 377M133 377L133 375M133 375L132 373M132 373L132 371M133 377L133 375M133 375L134 373M134 373L135 371M136 388L139 386M139 386L142 384M142 384L144 380M144 380L144 377M144 377L145 374M145 374L146 372M144 380L146 380M146 380L149 380M149 380L150 378M72 361L72 356M72 356L70 352M70 352L68 348M68 348L66 346M66 346L63 344M63 344L60 343M60 343L59 341M59 341L57 339M57 339L55 338M68 348L67 345M67 345L67 342M67 342L66 339M66 339L65 337M65 337L64 336M64 336L63 333M66 339L67 337M67 337L69 335M69 335L69 333M72 361L76 357M76 357L79 354M79 354L83 352M83 352L85 349M85 349L87 346M87 346L87 343M87 343L87 341M87 341L87 339M87 339L86 338M87 343L89 342M89 342L90 340M90 340L90 339M83 352L85 349M85 349L88 347M88 347L90 344M90 344L92 343M92 343L94 341M94 341L97 340M47 485L44 482M44 482L40 480M40 480L37 478M37 478L34 478M34 478L31 478M31 478L28 477M28 477L26 477M26 477L24 478M24 478L22 479M28 477L26 476M26 476L24 476M24 476L23 475M37 478L35 475M35 475L32 473M32 473L31 470M31 470L29 469M29 469L28 467M28 467L25 467M31 470L31 468M31 468L29 466M29 466L29 464M47 485L47 481M47 481L47 477M47 477L45 473M45 473L43 471M43 471L41 468M41 468L39 466M39 466L38 464M38 464L37 462M37 462L36 460M45 473L45 470M45 470L45 468M45 468L45 465M45 465L44 463M44 463L43 462M43 462L42 460M45 465L46 464M46 464L47 463M47 463L48 461M85 331L82 327M82 327L80 323M80 323L78 319M78 319L76 317M76 317L74 314M74 314L73 310M73 310L70 310M70 310L68 310M68 310L66 308M73 310L72 308M72 308L72 305M72 305L73 303M78 319L77 316M77 316L77 313M77 313L77 309M77 309L77 307M77 307L78 304M78 304L78 302M85 331L88 327M88 327L89 322M89 322L91 317M91 317L90 314M90 314L90 311M90 311L91 307M91 307L91 305M91 305L89 302M89 302L88 300M91 307L91 305M91 305L92 303M92 303L92 301M91 317L92 314M92 314L95 313M95 313L98 311M98 311L99 308M99 308L100 306M100 306L102 304M98 311L100 309M100 309L102 308M102 308L103 306M133 344L132 341M132 341L133 337M133 337L134 333M134 333L134 330M134 330L132 328M132 328L130 326M130 326L129 324M129 324L127 322M127 322L126 320M130 326L131 324M131 324L131 322M131 322L132 319M134 333L135 330M135 330L134 328M134 328L134 326M134 326L133 324M133 324L132 323M132 323L132 321M134 326L136 324M136 324L137 323M137 323L138 321M133 344L135 341M135 341L138 338M138 338L141 335M141 335L142 332M142 332L142 330M142 330L142 327M142 327L142 325M142 325L143 323M143 323L143 322M142 327L143 325M143 325L144 324M144 324L145 322M141 335L143 334M143 334L146 333M146 333L149 332M149 332L151 331M151 331L152 329M152 329L152 327M149 332L151 333M151 333L154 333M154 333L156 333M47 405L43 403M43 403L39 402M39 402L35 400M35 400L32 400M32 400L29 400M29 400L27 398M27 398L25 398M25 398L23 399M23 399L21 398M35 400L34 398M34 398L31 397M31 397L28 395M28 395L27 394M27 394L25 393M25 393L24 392M28 395L27 394M27 394L26 392M26 392L26 390M47 405L46 401M46 401L47 397M47 397L46 393M46 393L44 390M44 390L42 389M42 389L41 386M41 386L40 384M40 384L40 381M40 381L40 379M46 393L47 390M47 390L49 387M49 387L51 385M51 385L52 383M52 383L53 381M53 381L53 379M51 385L54 384M54 384L56 382M56 382L57 381" stroke="#5a4c46" stroke-width="1.0" fill="none" opacity="0.75"/>
<path d="M27 608L26 606M410 595L409 592M116 613L116 611M257 562L256 560M221 577L222 574M232 560L233 558M349 566L350 564M112 622L111 621M88 623L88 622M68 575L68 573M125 623L124 621M211 612L212 610M389 615L389 612M347 637L348 636M217 626L218 625M175 608L175 607M314 591L314 589M156 610L156 608M87 627L87 626M272 637L271 634M68 581L68 579M276 583L277 581M335 614L336 613M107 581L107 579M59 613L58 610M82 628L82 626M172 623L172 620M73 627L72 625M275 628L275 625M60 592L60 589M120 577L121 575M236 625L237 622M64 594L65 592M116 604L116 603M85 566L85 564M3 572L4 569M143 560L142 558M173 637L172 636M236 604L236 601M107 625L106 623M341 579L342 577M363 564L364 562M115 613L114 611M198 565L198 564M325 588L325 587M210 632L209 630M340 612L341 609M356 598L356 595M4 609L3 607M215 616L214 614M191 609L190 608M252 611L251 610M20 574L19 572M147 576L147 574M9 574L9 573M403 567L404 565M74 562L73 559M136 605L136 602M331 599L332 596M165 565L166 563M223 621L222 618M386 612L385 609M186 587L187 585M392 636L391 633M185 618L185 615M159 599L159 598M224 632L224 630M23 564L23 562M109 586L109 584M234 597L233 594M380 619L380 617M335 632L334 631M107 568L106 567M145 563L145 561M6 576L6 574M101 635L100 633M372 619L371 617M369 564L370 563M344 633L344 632M405 632L404 631M260 592L260 590M207 596L207 594M134 602L135 599M422 604L421 601M358 615L359 612M89 576L89 575M18 605L17 604M264 587L264 586M87 565L88 563M85 620L84 619M260 589L259 588M40 570L40 568M50 598L49 596M33 634L33 633M84 597L84 596M156 610L155 608M113 611L114 610M6 608L6 605M165 628L164 626M326 629L325 626M89 595L89 594M250 562L251 559M370 624L371 622M72 566L72 564M26 611L25 610M184 622L183 620M24 569L25 566M395 622L395 619M352 599L352 598M2 622L2 620M384 621L385 618M375 597L375 596M155 589L156 586M175 568L175 566M40 621L41 618M101 565L101 563M150 584L149 582M420 596L420 595M58 568L59 566M61 599L61 598" stroke="#c4c0bc" stroke-width="0.5" fill="none" opacity="0.75"/>
<path d="M269 537L269 535M15 569L15 566M300 604L300 602M114 565L115 561M43 518L42 515M247 522L247 520M249 535L248 532M314 518L313 515M108 560L108 557M174 518L174 517M156 535L155 533M250 556L250 552M132 628L131 627M382 588L382 586M149 539L150 537M212 528L212 527M48 524L48 521M320 525L320 523M373 543L373 541M403 541L402 540M134 536L135 534M118 554L118 552M349 566L350 564M395 534L394 531M103 539L102 537M35 544L35 542M226 529L227 526M358 553L357 551M405 560L405 557M170 571L170 568M40 528L40 527M144 576L145 573M307 555L307 553M310 521L310 519M57 554L57 552M196 634L195 631M256 588L257 586M81 572L81 570M380 536L381 533M21 554L22 553M242 553L241 550M323 527L322 525M132 528L132 526M317 592L318 591M31 579L31 576M19 518L20 517M66 560L65 558M379 520L379 517M11 553L11 552M205 530L205 528M156 522L158 520M183 537L184 535M295 592L295 590M340 559L340 558M75 548L76 545M130 566L129 564M346 614L347 612M324 523L324 521M20 574L21 572M362 545L363 543M222 580L223 577M71 562L71 560M329 567L328 566M7 561L8 559M216 536L216 534M132 553L133 551M362 585L362 583M67 532L66 531M304 549L304 548M177 544L175 541M134 628L134 626M189 546L189 543M88 576L87 573M109 547L109 545M199 531L199 529M274 549L275 546M264 619L264 616M325 538L325 535M141 564L142 563M130 531L131 528M306 538L306 536M174 559L175 556M184 536L183 534M374 578L373 575M403 530L403 529M138 555L138 554M347 540L346 536M100 527L101 525M3 606L3 603M76 566L77 563M136 541L135 539M252 521L251 518M138 518L138 516M352 562L351 559M416 545L415 543M250 549L250 545M170 559L170 556M288 564L287 561M153 526L154 524M163 557L163 556M109 523L109 520M373 571L373 568M367 555L367 553M28 560L29 557M339 615L339 614M211 548L210 546M386 537L385 533M210 531L210 529M15 531L15 529M111 529L110 527M327 545L327 543" stroke="#8a847e" stroke-width="0.75" fill="none" opacity="0.75"/>
<path d="M67 553L67 552M83 546L82 544M13 520L12 518M406 543L405 541M267 532L266 529M132 529L132 527M163 524L164 522M352 580L351 578M374 547L374 545M349 552L349 550M260 571L261 570M140 550L140 547M246 541L247 539M128 518L127 516M282 549L282 548M149 524L147 521M242 594L242 593M81 547L80 544M338 554L337 550M342 563L343 560M207 551L207 550M209 558L207 555M392 615L391 613M330 521L330 520M361 554L362 551M388 560L387 558M391 534L392 532M399 555L400 552M171 549L170 547M321 536L322 534M204 567L204 565M89 556L89 554M119 540L119 538M324 560L325 558M313 580L313 578M322 572L322 571M304 552L303 551M346 528L345 526M388 553L387 550M123 600L124 597M41 557L40 554M32 542L33 540M152 523L151 520M410 543L410 540M154 546L154 544M313 551L313 549M344 568L344 566M392 535L391 532M39 559L39 556M334 540L334 538M371 593L370 589M227 553L227 552M87 520L85 516M88 593L88 591M283 556L282 555M405 587L405 584M38 539L38 537M145 589L146 586M160 525L161 522M259 535L260 533M303 572L302 569M266 522L265 521M196 524L197 523M232 522L232 521M154 601L154 600M332 562L333 559M324 566L324 565M61 561L61 559M104 530L102 527M221 544L220 542M412 522L412 520M231 609L232 607M187 545L187 543M151 522L150 520M355 542L355 540M295 524L295 520M341 562L340 561M232 519L233 518M264 554L264 551M290 605L291 603M328 522L329 520M253 530L253 527M363 590L363 589M241 520L242 517M223 528L223 527M126 518L126 516M414 549L413 546M234 583L234 581M397 603L396 601M78 527L77 525M58 553L59 551M17 544L17 543M110 564L111 561M368 574L368 573M109 538L108 535M381 549L381 548" stroke="#a09a96" stroke-width="0.75" fill="none" opacity="0.75"/>
<path d="M392 573L392 571M81 535L80 532M129 523L129 522M281 571L280 569M393 555L393 553M5 565L5 563M237 571L236 569M79 527L80 523M78 534L78 533M54 630L54 628M9 553L9 550M247 522L246 520M176 544L177 542M132 572L131 571M352 619L352 617M96 530L96 527M212 521L211 517M83 529L82 526M338 602L338 599M417 557L417 556M228 529L227 526M63 523L64 521M186 619L187 617M222 588L222 586M48 613L48 612M178 539L178 538M373 532L373 531M261 587L262 584M348 556L348 554M10 535L11 532M393 592L392 590M358 537L358 535M379 592L379 589M43 529L44 526M272 574L273 572M233 519L234 517M359 616L359 615M164 546L165 543M401 530L401 528M248 532L248 529M61 594L60 590M193 565L193 564M247 552L247 550M116 540L117 538M319 571L319 570M31 520L31 519M32 521L32 520M355 604L355 601M137 542L137 540M276 625L275 622M36 526L35 523M285 572L285 570M116 520L116 517M92 540L93 539M402 583L401 580M385 578L384 575M35 536L35 533M196 553L197 550M194 523L195 522M39 551L39 550M82 537L82 536M416 529L417 526M80 552L80 551M386 576L387 573M2 582L1 579M319 548L320 546M240 558L240 555M370 591L370 589M341 518L342 517M220 530L221 529M373 529L373 528M269 536L270 533M373 538L373 537M72 542L71 539M341 545L340 543M393 523L392 520M283 556L282 554M110 566L111 564M180 529L181 526M161 550L161 548M298 586L297 583M418 532L418 531M174 522L173 520M248 549L249 545M117 530L118 527M77 525L77 523M88 539L88 536M259 543L260 542M343 558L342 554M86 545L85 542M145 519L144 517" stroke="#b8b4b0" stroke-width="0.75" fill="none" opacity="0.75"/>
<path d="M78 547 L80 470 Q82 430 96 400 L110 388 Q116 420 110 470 L114 547 Z" fill="#fbfbfb"/>
<path d="M79 547 L81 470 Q83 430 97 400" stroke="#3e342e" stroke-width="4.5" fill="none"/>
<path d="M112 547 L109 470 Q111 430 104 404" stroke="#3e342e" stroke-width="4" fill="none"/>
<path d="M30 549 Q80 553 170 551" stroke="#9a948e" stroke-width="1.2" fill="none" opacity="0.6"/>
<path d="M98 412 Q120 372 146 345 Q170 318 190 298 Q222 266 260 240 Q276 230 294 222" stroke="#3e342e" stroke-width="11" fill="none" stroke-linecap="round"/>
<path d="M98 412 Q120 372 146 345 Q170 318 190 298 Q222 266 260 240 Q276 230 294 222" stroke="#fbfbfb" stroke-width="5" fill="none" stroke-linecap="round" transform="translate(-2 -2.5)"/>
<path d="M190 298 Q196 268 195 250 Q186 222 178 190" stroke="#5a3a2a" stroke-width="6" fill="none" stroke-linecap="round"/>
<path d="M190 298 Q196 268 195 250 Q186 222 178 190" stroke="#fbfbfb" stroke-width="2.5" fill="none" stroke-linecap="round" transform="translate(-1.5 0)"/>
<path d="M222 266 Q228 250 236 240 Q246 228 258 222" stroke="#3e342e" stroke-width="4.5" fill="none" stroke-linecap="round"/>
<path d="M222 266 Q228 250 236 240 Q246 228 258 222" stroke="#fbfbfb" stroke-width="2" fill="none" stroke-linecap="round" transform="translate(-1 -1.2)"/>
<path d="M294 222 Q320 212 340 205" stroke="#3e342e" stroke-width="3.5" fill="none" stroke-linecap="round"/>
<path d="M294 222 Q320 212 340 205" stroke="#fbfbfb" stroke-width="1.5" fill="none" stroke-linecap="round" transform="translate(0 -1)"/>
<path d="M104 400 Q112 370 110 335 Q106 305 98 290 L96 279" stroke="#4a3428" stroke-width="7" fill="none" stroke-linecap="round"/>
<path d="M104 400 Q112 370 110 335 Q106 305 98 290 L96 279" stroke="#fbfbfb" stroke-width="3.2" fill="none" stroke-linecap="round" transform="translate(1.5 0)"/>
<path d="M93 280 L98 276 L101 281" stroke="#3e342e" stroke-width="2" fill="none"/>
<g mask="url(#mm)">
<rect x="110" y="160" width="300" height="140" fill="#4e481c" opacity="1"/>
<rect x="110" y="160" width="300" height="140" filter="url(#mist)"/>
<rect x="110" y="160" width="300" height="140" filter="url(#mist2)"/>
</g>
</svg></div>
<div style="position:absolute;left:1538px;top:918px;width:164px;height:32px;background:#f2cb4f;border-radius:5px"></div>
<div class="t" style="left:836px;top:956.34px;font-size:25px;line-height:30px;color:#ebebeb;font-weight:normal;">_DSC6397-1.psd</div>
<div class="t" style="left:836px;top:996.34px;font-size:25px;line-height:30px;color:#c4c4c4;font-weight:normal;">859,14 MB</div>
<div class="t" style="left:1538px;top:956.34px;font-size:25px;line-height:30px;color:#ebebeb;font-weight:normal;">_DSC9214-1.psd</div>
<div class="t" style="left:1538px;top:996.34px;font-size:25px;line-height:30px;color:#c4c4c4;font-weight:normal;">396,18 MB</div>
</body></html>
